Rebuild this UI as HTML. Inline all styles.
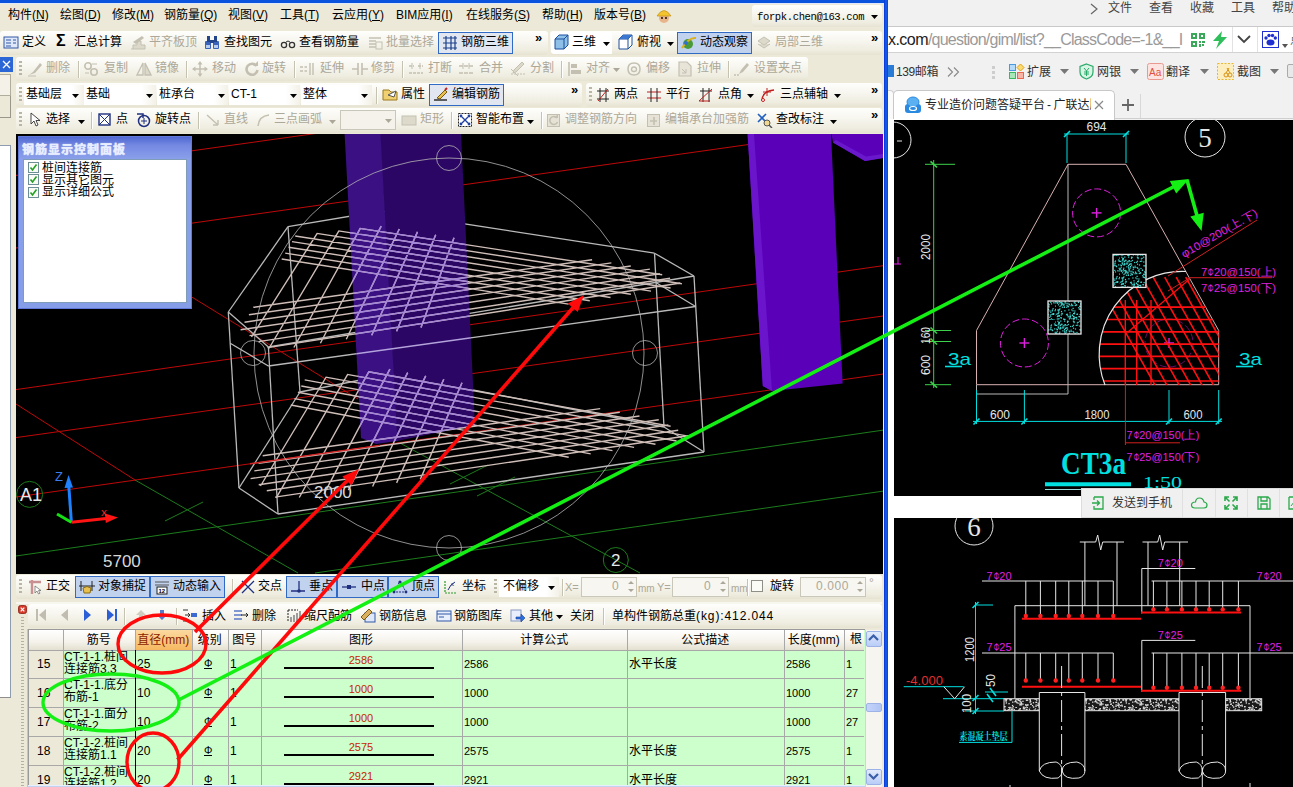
<!DOCTYPE html><html lang="zh"><head><meta charset="utf-8"><title>GGJ</title><style>
*{box-sizing:border-box;margin:0;padding:0}
html,body{width:1293px;height:787px;overflow:hidden;background:#ece9d8}
body{position:relative;font-family:"Liberation Serif","Noto Serif CJK SC",serif;font-size:12px;color:#000}
div,span.t,svg{position:absolute}
span.t{white-space:nowrap;line-height:14px;font-size:12px}
.s{font-family:"Liberation Sans","Noto Sans CJK SC",sans-serif;font-weight:400}
.g{color:#aca899}
.y{font-family:"Liberation Sans","Noto Sans CJK SC",sans-serif}
.tb{background:linear-gradient(#fefefc 0%,#f7f6ef 40%,#efede0 80%,#e6e3d2 100%);border-radius:3px}
.btn{background:#c1d2ee;border:1px solid #316ac5}
.btn2{background:#e1e6f0;border:1px solid #316ac5}
.sep{width:1px;background:#c5c2b2;border-right:1px solid #fff;width:2px}
.grip{width:2px;background:repeating-linear-gradient(#b9b6a6 0 2px,transparent 2px 4px)}
.cb{background:#fff}
</style></head><body>
<div style="left:0px;top:0px;width:884px;height:3px;background:#0a53dc"></div>
<div style="left:0px;top:3px;width:884px;height:1px;background:#dfe8fa"></div>
<div style="left:884px;top:0px;width:4px;height:787px;background:linear-gradient(90deg,#0831d9,#1660e8 50%,#0a3fd8)"></div>
<div style="left:883px;top:134px;width:1px;height:440px;background:#fff"></div>
<div style="left:0px;top:4px;width:884px;height:26px;background:#ece9d8"></div>
<span class="t s" style="left:8px;top:8px;">构件(<u>N</u>)</span>
<span class="t s" style="left:60px;top:8px;">绘图(<u>D</u>)</span>
<span class="t s" style="left:112px;top:8px;">修改(<u>M</u>)</span>
<span class="t s" style="left:164px;top:8px;">钢筋量(<u>Q</u>)</span>
<span class="t s" style="left:228px;top:8px;">视图(<u>V</u>)</span>
<span class="t s" style="left:280px;top:8px;">工具(<u>T</u>)</span>
<span class="t s" style="left:332px;top:8px;">云应用(<u>Y</u>)</span>
<span class="t s" style="left:396px;top:8px;">BIM应用(<u>I</u>)</span>
<span class="t s" style="left:466px;top:8px;">在线服务(<u>S</u>)</span>
<span class="t s" style="left:542px;top:8px;">帮助(<u>H</u>)</span>
<span class="t s" style="left:594px;top:8px;">版本号(<u>B</u>)</span>
<svg style="left:656px;top:8px;" width="16" height="16" viewBox="0 0 16 16"><circle cx="8" cy="10" r="5" fill="#e8b48a"/><path d="M1 8Q8 -3 15 8Z" fill="#f4c430" stroke="#b8860b" stroke-width=".6"/><circle cx="6" cy="10" r=".9"/><circle cx="10" cy="10" r=".9"/></svg>
<div class="tb" style="left:752px;top:5px;width:130px;height:22px;"></div>
<span class="t s" style="left:757px;top:10px;font-family:'Liberation Mono',monospace;font-size:10.5px;letter-spacing:-.35px">forpk.chen@163.com</span>
<svg style="left:871px;top:15px;" width="7" height="4" viewBox="0 0 7 4"><path d="M0 0H7L3.5 4Z" fill="#000"/></svg>
<div class="tb" style="left:0px;top:31px;width:548px;height:24px;"></div>
<div class="tb" style="left:550px;top:31px;width:332px;height:24px;"></div>
<svg style="left:3px;top:35px;" width="16" height="16" viewBox="0 0 16 16"><rect x="1" y="2" width="14" height="11" fill="#dfe8f8" stroke="#3058a8"/><path d="M3 5H8M3 8H8M3 11H8M10 5H13M10 8H13" stroke="#3058a8"/></svg>
<span class="t s" style="left:22px;top:35px;">定义</span>
<span class="t s" style="left:56px;top:32px;font-weight:bold;font-size:16px;line-height:18px;font-family:'Liberation Sans',sans-serif">Σ</span>
<span class="t s" style="left:74px;top:35px;">汇总计算</span>
<svg style="left:130px;top:35px;" width="16" height="16" viewBox="0 0 16 16"><path d="M1 14H15V10H11V6H7V10H3V14" fill="#dcd9ca" stroke="#c3c0b1"/><path d="M3 7L12 1L14 3L6 9Z" fill="#c3c0b1"/></svg>
<span class="t s g" style="left:149px;top:35px;">平齐板顶</span>
<svg style="left:204px;top:35px;" width="16" height="16" viewBox="0 0 16 16"><rect x="1" y="6" width="6" height="8" rx="1" fill="#3a62b8"/><rect x="9" y="6" width="6" height="8" rx="1" fill="#3a62b8"/><rect x="3" y="1" width="3" height="6" fill="#22448a"/><rect x="10" y="1" width="3" height="6" fill="#22448a"/><rect x="6" y="5" width="4" height="3" fill="#22448a"/><rect x="2" y="10" width="4" height="3" fill="#b8ccf0"/><rect x="10" y="10" width="4" height="3" fill="#b8ccf0"/></svg>
<span class="t s" style="left:224px;top:35px;">查找图元</span>
<svg style="left:280px;top:35px;" width="16" height="16" viewBox="0 0 16 16"><circle cx="4" cy="10" r="2.6" fill="none" stroke="#333" stroke-width="1.3"/><circle cx="12" cy="10" r="2.6" fill="none" stroke="#333" stroke-width="1.3"/><path d="M6 7Q8 5 10 7" fill="none" stroke="#333"/></svg>
<span class="t s" style="left:299px;top:35px;">查看钢筋量</span>
<svg style="left:367px;top:35px;" width="16" height="16" viewBox="0 0 16 16"><path d="M2 3H14M2 6H9M2 9H9M2 12H9" stroke="#c4c1b2" stroke-width="1.5"/><rect x="9" y="7" width="6" height="7" fill="none" stroke="#c4c1b2"/></svg>
<span class="t s g" style="left:386px;top:35px;">批量选择</span>
<div class="btn2" style="left:438px;top:32px;width:75px;height:22px;"></div>
<svg style="left:442px;top:35px;" width="16" height="16" viewBox="0 0 16 16"><path d="M1 3H15M1 8H15M1 13H15M4 1V15M9 1V15M13 1V15" stroke="#1c3f8c" stroke-width="1.2" fill="none"/></svg>
<span class="t s" style="left:461px;top:35px;">钢筋三维</span>
<span class="t s" style="left:535px;top:31px;font-weight:bold;font-size:13px;font-family:'Liberation Sans',sans-serif">»</span>
<div style="left:551px;top:32px;width:61px;height:22px;background:#fff;border-radius:3px 0 0 3px"></div>
<svg style="left:553px;top:34px;" width="17" height="17" viewBox="0 0 17 17"><path d="M2 5L6 1H15V11L11 15H2Z" fill="#8fc0e8" stroke="#1c4f9c"/><path d="M2 5H11V15M11 5L15 1" fill="none" stroke="#1c4f9c"/></svg>
<span class="t s" style="left:572px;top:35px;">三维</span>
<svg style="left:603px;top:42px;" width="7" height="4" viewBox="0 0 7 4"><path d="M0 0H7L3.5 4Z" fill="#000"/></svg>
<svg style="left:617px;top:34px;" width="17" height="17" viewBox="0 0 17 17"><path d="M2 5L6 1H15V11L11 15H2Z" fill="#fff" stroke="#1c4f9c"/><path d="M2 5H11V15M11 5L15 1" fill="none" stroke="#1c4f9c"/><path d="M6 1H15L11 5H2Z" fill="#3c78d0"/></svg>
<span class="t s" style="left:637px;top:35px;">俯视</span>
<svg style="left:667px;top:42px;" width="7" height="4" viewBox="0 0 7 4"><path d="M0 0H7L3.5 4Z" fill="#000"/></svg>
<div class="btn" style="left:677px;top:32px;width:75px;height:22px;"></div>
<svg style="left:681px;top:35px;" width="16" height="16" viewBox="0 0 16 16"><circle cx="7" cy="9" r="5" fill="#4a9a3a"/><path d="M1 13Q8 2 15 3" stroke="#d8b020" stroke-width="2" fill="none"/><circle cx="5" cy="8" r="2" fill="#2f6fd0"/></svg>
<span class="t s" style="left:700px;top:35px;">动态观察</span>
<svg style="left:756px;top:35px;" width="16" height="16" viewBox="0 0 16 16"><path d="M2 6L8 2L14 6L8 10Z M2 9L8 13L14 9" fill="#dddacb" stroke="#c4c1b2"/></svg>
<span class="t s g" style="left:775px;top:35px;">局部三维</span>
<span class="t s" style="left:871px;top:31px;font-weight:bold;font-size:13px;font-family:'Liberation Sans',sans-serif">»</span>
<div style="left:0px;top:56px;width:14px;height:520px;background:#ece9d8"></div>
<div style="left:0px;top:57px;width:13px;height:15px;background:#2b66d6"></div>
<svg style="left:1px;top:59px;" width="11" height="11" viewBox="0 0 11 11"><path d="M2 2L9 9M9 2L2 9" stroke="#fff" stroke-width="1.3"/></svg>
<div style="left:0px;top:74px;width:11px;height:22px;background:#f4f2e8;border:1px solid #b0ad9c;border-left:0"></div>
<div style="left:0px;top:96px;width:11px;height:22px;background:#ece9d8;border:1px solid #9a978a;border-left:0;border-top:0"></div>
<div style="left:0px;top:145px;width:11px;height:553px;background:#fff;border-top:1px solid #8e9cb0;border-right:1px solid #8e9cb0;border-bottom:1px solid #8e8e8e"></div>
<div class="tb" style="left:16px;top:57px;width:792px;height:24px;"></div>
<div class="grip" style="left:19px;top:61px;width:3px;height:16px;"></div>
<svg style="left:27px;top:61px;" width="16" height="16" viewBox="0 0 16 16"><path d="M2 14L6 11L13 2L15 4L8 12Z" fill="#c3c0b1"/><path d="M1 15H9" stroke="#c3c0b1"/></svg>
<span class="t s g" style="left:46px;top:61px;">删除</span>
<svg style="left:83px;top:61px;" width="16" height="16" viewBox="0 0 16 16"><circle cx="5" cy="5" r="3.2" fill="none" stroke="#c3c0b1" stroke-width="1.6"/><circle cx="11" cy="11" r="3.2" fill="none" stroke="#c3c0b1" stroke-width="1.6"/><path d="M9 3H14M2 12H6" stroke="#c3c0b1"/></svg>
<span class="t s g" style="left:104px;top:61px;">复制</span>
<svg style="left:136px;top:61px;" width="16" height="16" viewBox="0 0 16 16"><path d="M7 2V14H1Z" fill="none" stroke="#c3c0b1" stroke-width="1.3"/><path d="M9 2V14H15Z" fill="#dcd9ca" stroke="#c3c0b1" stroke-width="1.3"/></svg>
<span class="t s g" style="left:155px;top:61px;">镜像</span>
<svg style="left:192px;top:61px;" width="16" height="16" viewBox="0 0 16 16"><path d="M8 1V15M1 8H15" stroke="#c3c0b1" stroke-width="1.5"/><path d="M8 0L5.5 3.5H10.5ZM8 16L5.5 12.5H10.5ZM0 8L3.5 5.5V10.5ZM16 8L12.5 5.5V10.5Z" fill="#c3c0b1"/></svg>
<span class="t s g" style="left:212px;top:61px;">移动</span>
<svg style="left:244px;top:61px;" width="16" height="16" viewBox="0 0 16 16"><path d="M12.5 5A5.5 5.5 0 1 0 13.5 9" fill="none" stroke="#c3c0b1" stroke-width="2.6"/><path d="M9 5H14V0Z" fill="#c3c0b1"/></svg>
<span class="t s g" style="left:262px;top:61px;">旋转</span>
<svg style="left:299px;top:61px;" width="16" height="16" viewBox="0 0 16 16"><path d="M1 6H8M1 10H8" stroke="#c3c0b1" stroke-width="1.4" stroke-dasharray="3 1.5"/><path d="M11 2V14M14 2V14" stroke="#c3c0b1" stroke-width="1.4"/></svg>
<span class="t s g" style="left:320px;top:61px;">延伸</span>
<svg style="left:352px;top:61px;" width="16" height="16" viewBox="0 0 16 16"><path d="M0 8H6M10 8H16" stroke="#c3c0b1" stroke-width="1.4"/><path d="M6 2V14M10 2V14" stroke="#c3c0b1" stroke-width="1.6"/></svg>
<span class="t s g" style="left:371px;top:61px;">修剪</span>
<svg style="left:408px;top:61px;" width="16" height="16" viewBox="0 0 16 16"><path d="M1 5H6M10 5H15M1 12H15" stroke="#c3c0b1" stroke-width="1.6" stroke-dasharray="3 1"/><path d="M4 2V8M12 2V8" stroke="#c3c0b1"/></svg>
<span class="t s g" style="left:428px;top:61px;">打断</span>
<svg style="left:458px;top:61px;" width="16" height="16" viewBox="0 0 16 16"><path d="M1 5H15M1 12H15" stroke="#c3c0b1" stroke-width="1.6" stroke-dasharray="4 1"/><path d="M5 2V8M11 2V8" stroke="#c3c0b1"/></svg>
<span class="t s g" style="left:479px;top:61px;">合并</span>
<svg style="left:510px;top:61px;" width="16" height="16" viewBox="0 0 16 16"><path d="M1 13H15" stroke="#c3c0b1" stroke-dasharray="2 1"/><path d="M3 12L6 11L14 3L12 1L4 9Z" fill="#dcd9ca" stroke="#c3c0b1"/><path d="M1 8L8 15" stroke="#c3c0b1"/></svg>
<span class="t s g" style="left:530px;top:61px;">分割</span>
<svg style="left:567px;top:61px;" width="16" height="16" viewBox="0 0 16 16"><path d="M2 1V15" stroke="#c3c0b1" stroke-width="1.6"/><rect x="4" y="3" width="6" height="4" fill="#c3c0b1"/><rect x="4" y="9" width="10" height="4" fill="#c3c0b1"/></svg>
<span class="t s g" style="left:586px;top:61px;">对齐</span>
<svg style="left:626px;top:61px;" width="16" height="16" viewBox="0 0 16 16"><path d="M8 2Q14 2 14 8Q14 14 8 14Q2 14 2 8Q2 2 8 2Z" fill="none" stroke="#c3c0b1" stroke-width="1.5"/><path d="M8 6Q10.5 6 10.5 8.5Q10.5 10.5 8 10.5Q5.5 10.5 5.5 8.5Q5.5 6 8 6Z" fill="none" stroke="#c3c0b1" stroke-width="1.3"/></svg>
<span class="t s g" style="left:646px;top:61px;">偏移</span>
<svg style="left:677px;top:61px;" width="16" height="16" viewBox="0 0 16 16"><path d="M2 1H10L14 5V15H2Z" fill="#e8e5d8" stroke="#c3c0b1" stroke-width="1.2"/><path d="M5 8L9 12M9 8V12H5" stroke="#c3c0b1" fill="none"/></svg>
<span class="t s g" style="left:697px;top:61px;">拉伸</span>
<svg style="left:733px;top:61px;" width="16" height="16" viewBox="0 0 16 16"><path d="M1 14H6" stroke="#c3c0b1" stroke-width="1.6" stroke-dasharray="2 1"/><path d="M6 13L8 9L14 2L16 4L10 11Z" fill="#c3c0b1"/></svg>
<span class="t s g" style="left:754px;top:61px;">设置夹点</span>
<svg style="left:613px;top:68px;" width="7" height="4" viewBox="0 0 7 4"><path d="M0 0H7L3.5 4Z" fill="#aca899"/></svg>
<div class="sep" style="left:78px;top:61px;width:2px;height:17px;"></div>
<div class="sep" style="left:186px;top:61px;width:2px;height:17px;"></div>
<div class="sep" style="left:294px;top:61px;width:2px;height:17px;"></div>
<div class="sep" style="left:402px;top:61px;width:2px;height:17px;"></div>
<div class="sep" style="left:561px;top:61px;width:2px;height:17px;"></div>
<div class="sep" style="left:728px;top:61px;width:2px;height:17px;"></div>
<div class="tb" style="left:16px;top:83px;width:566px;height:24px;"></div>
<div class="tb" style="left:586px;top:83px;width:296px;height:24px;"></div>
<div class="grip" style="left:19px;top:87px;width:3px;height:16px;"></div>
<div style="left:24px;top:85px;width:60px;height:20px;background:linear-gradient(90deg,#fff 80%,#f3f1e7)"></div>
<span class="t s" style="left:26px;top:87px;">基础层</span>
<svg style="left:72px;top:94px;" width="7" height="4" viewBox="0 0 7 4"><path d="M0 0H7L3.5 4Z" fill="#000"/></svg>
<div style="left:84px;top:85px;width:72px;height:20px;background:linear-gradient(90deg,#fff 80%,#f3f1e7)"></div>
<span class="t s" style="left:86px;top:87px;">基础</span>
<svg style="left:146px;top:94px;" width="7" height="4" viewBox="0 0 7 4"><path d="M0 0H7L3.5 4Z" fill="#000"/></svg>
<div style="left:157px;top:85px;width:71px;height:20px;background:linear-gradient(90deg,#fff 80%,#f3f1e7)"></div>
<span class="t s" style="left:159px;top:87px;">桩承台</span>
<svg style="left:218px;top:94px;" width="7" height="4" viewBox="0 0 7 4"><path d="M0 0H7L3.5 4Z" fill="#000"/></svg>
<div style="left:229px;top:85px;width:71px;height:20px;background:linear-gradient(90deg,#fff 80%,#f3f1e7)"></div>
<span class="t s" style="left:231px;top:87px;">CT-1</span>
<svg style="left:290px;top:94px;" width="7" height="4" viewBox="0 0 7 4"><path d="M0 0H7L3.5 4Z" fill="#000"/></svg>
<div style="left:301px;top:85px;width:71px;height:20px;background:linear-gradient(90deg,#fff 80%,#f3f1e7)"></div>
<span class="t s" style="left:303px;top:87px;">整体</span>
<svg style="left:361px;top:94px;" width="7" height="4" viewBox="0 0 7 4"><path d="M0 0H7L3.5 4Z" fill="#000"/></svg>
<div class="sep" style="left:376px;top:87px;width:2px;height:17px;"></div>
<svg style="left:382px;top:86px;" width="16" height="16" viewBox="0 0 16 16"><path d="M1 4H7L9 6H15V14H1Z" fill="#f0d070" stroke="#9a7a20"/><path d="M6 9L14 5L12 11Z" fill="#fff" stroke="#555"/></svg>
<span class="t s" style="left:401px;top:87px;">属性</span>
<div class="btn2" style="left:429px;top:84px;width:75px;height:22px;"></div>
<svg style="left:433px;top:87px;" width="16" height="16" viewBox="0 0 16 16"><path d="M1 13H14" stroke="#222" stroke-width="1.4"/><path d="M4 11L12 3L14 5L7 12Z" fill="#e8c050" stroke="#7a5a10"/><path d="M12 3L14 1" stroke="#c02020" stroke-width="2"/></svg>
<span class="t s" style="left:452px;top:87px;">编辑钢筋</span>
<span class="t s" style="left:571px;top:83px;font-weight:bold;font-size:13px;font-family:'Liberation Sans',sans-serif">»</span>
<div class="grip" style="left:589px;top:87px;width:3px;height:16px;"></div>
<svg style="left:595px;top:87px;" width="16" height="16" viewBox="0 0 16 16"><path d="M2 4H14M2 12H14M5 1V15M11 1V15" stroke="#222" fill="none"/><path d="M3 14L13 2" stroke="#c02020"/></svg>
<span class="t s" style="left:614px;top:87px;">两点</span>
<svg style="left:646px;top:87px;" width="16" height="16" viewBox="0 0 16 16"><path d="M1 5H15M1 11H15" stroke="#c02020"/><path d="M5 1V15M11 1V15" stroke="#222"/></svg>
<span class="t s" style="left:666px;top:87px;">平行</span>
<svg style="left:698px;top:87px;" width="16" height="16" viewBox="0 0 16 16"><path d="M2 4H14M5 1V15M11 1V15" stroke="#222" fill="none"/><path d="M1 14L14 2M1 14H12" stroke="#c02020"/></svg>
<span class="t s" style="left:718px;top:87px;">点角</span>
<svg style="left:747px;top:94px;" width="7" height="4" viewBox="0 0 7 4"><path d="M0 0H7L3.5 4Z" fill="#000"/></svg>
<svg style="left:760px;top:87px;" width="16" height="16" viewBox="0 0 16 16"><path d="M2 14Q2 4 14 3" stroke="#c02020" fill="none" stroke-width="1.3"/><path d="M7 1V9M3 5H11" stroke="#c02020"/><circle cx="3" cy="13" r="1.5" fill="#fff" stroke="#c02020"/></svg>
<span class="t s" style="left:780px;top:87px;">三点辅轴</span>
<svg style="left:834px;top:94px;" width="7" height="4" viewBox="0 0 7 4"><path d="M0 0H7L3.5 4Z" fill="#000"/></svg>
<span class="t s" style="left:871px;top:83px;font-weight:bold;font-size:13px;font-family:'Liberation Sans',sans-serif">»</span>
<div class="tb" style="left:16px;top:108px;width:866px;height:25px;"></div>
<div class="grip" style="left:19px;top:112px;width:3px;height:16px;"></div>
<svg style="left:28px;top:112px;" width="16" height="16" viewBox="0 0 16 16"><path d="M3 1V12L6 9L8 14L10 13L8 8.5H12Z" fill="#fff" stroke="#333" stroke-width=".9"/></svg>
<span class="t s" style="left:46px;top:112px;">选择</span>
<svg style="left:78px;top:120px;" width="7" height="4" viewBox="0 0 7 4"><path d="M0 0H7L3.5 4Z" fill="#000"/></svg>
<div class="sep" style="left:91px;top:112px;width:2px;height:17px;"></div>
<svg style="left:97px;top:112px;" width="16" height="16" viewBox="0 0 16 16"><rect x="2" y="2" width="11" height="11" fill="#fff" stroke="#203080" stroke-width="1.4"/><path d="M2 2L13 13M13 2L2 13" stroke="#203080"/></svg>
<span class="t s" style="left:116px;top:112px;">点</span>
<svg style="left:136px;top:111px;" width="17" height="17" viewBox="0 0 17 17"><circle cx="8" cy="10" r="5.5" fill="none" stroke="#203080" stroke-width="1.5"/><path d="M8 7V13M5 10H11" stroke="#203080"/><path d="M1 3H7V7" fill="none" stroke="#203080" stroke-width="1.5"/></svg>
<span class="t s" style="left:155px;top:112px;">旋转点</span>
<div class="sep" style="left:198px;top:112px;width:2px;height:17px;"></div>
<svg style="left:205px;top:112px;" width="16" height="16" viewBox="0 0 16 16"><path d="M2 3L13 13M13 13V8M13 13H8" stroke="#c4c1b2" stroke-width="1.4" fill="none"/></svg>
<span class="t s g" style="left:224px;top:112px;">直线</span>
<svg style="left:256px;top:112px;" width="16" height="16" viewBox="0 0 16 16"><path d="M2 14Q3 4 13 3" stroke="#c4c1b2" stroke-width="1.6" fill="none"/></svg>
<span class="t s g" style="left:274px;top:112px;">三点画弧</span>
<svg style="left:329px;top:120px;" width="7" height="4" viewBox="0 0 7 4"><path d="M0 0H7L3.5 4Z" fill="#aca899"/></svg>
<div style="left:340px;top:110px;width:56px;height:20px;background:#f4f2ea;border:1px solid #c9c7ba"></div>
<svg style="left:385px;top:119px;" width="7" height="4" viewBox="0 0 7 4"><path d="M0 0H7L3.5 4Z" fill="#aca899"/></svg>
<svg style="left:401px;top:112px;" width="16" height="16" viewBox="0 0 16 16"><rect x="1" y="4" width="14" height="9" fill="#dddacb" stroke="#c4c1b2"/></svg>
<span class="t s g" style="left:420px;top:112px;">矩形</span>
<div class="sep" style="left:451px;top:112px;width:2px;height:17px;"></div>
<svg style="left:457px;top:112px;" width="16" height="16" viewBox="0 0 16 16"><rect x="1.5" y="1.5" width="13" height="13" fill="#fff" stroke="#222" stroke-dasharray="2 1"/><path d="M5 5L11 11M11 5L5 11" stroke="#2040a0" stroke-width="1.4"/><circle cx="4" cy="4" r="1.4" fill="#2040a0"/><circle cx="12" cy="4" r="1.4" fill="#2040a0"/><circle cx="4" cy="12" r="1.4" fill="#2040a0"/><circle cx="12" cy="12" r="1.4" fill="#2040a0"/></svg>
<span class="t s" style="left:476px;top:112px;">智能布置</span>
<svg style="left:527px;top:120px;" width="7" height="4" viewBox="0 0 7 4"><path d="M0 0H7L3.5 4Z" fill="#000"/></svg>
<div class="sep" style="left:541px;top:112px;width:2px;height:17px;"></div>
<svg style="left:546px;top:112px;" width="16" height="16" viewBox="0 0 16 16"><rect x="1.5" y="2.5" width="12" height="12" fill="#e6e3d6" stroke="#c3c0b1"/><path d="M11 6A4 4 0 1 0 11.5 10" fill="none" stroke="#c3c0b1" stroke-width="1.6"/><path d="M8 6H12V2Z" fill="#c3c0b1"/></svg>
<span class="t s g" style="left:565px;top:112px;">调整钢筋方向</span>
<svg style="left:646px;top:112px;" width="16" height="16" viewBox="0 0 16 16"><rect x="1.5" y="2.5" width="12" height="12" fill="#e6e3d6" stroke="#c3c0b1"/><path d="M4 9H11M8 5V13" stroke="#c3c0b1" stroke-width="1.6"/></svg>
<span class="t s g" style="left:665px;top:112px;">编辑承台加强筋</span>
<svg style="left:757px;top:112px;" width="16" height="16" viewBox="0 0 16 16"><path d="M1 2L9 10M9 2L1 10" stroke="#2060c0" stroke-width="1.6"/><circle cx="10" cy="11" r="3" fill="#f0d890" stroke="#555"/><path d="M12 13L15 16" stroke="#555" stroke-width="1.5"/></svg>
<span class="t s" style="left:776px;top:112px;">查改标注</span>
<svg style="left:830px;top:120px;" width="7" height="4" viewBox="0 0 7 4"><path d="M0 0H7L3.5 4Z" fill="#000"/></svg>
<span class="t s" style="left:871px;top:108px;font-weight:bold;font-size:13px;font-family:'Liberation Sans',sans-serif">»</span>
<svg style="left:16px;top:134px;" width="868" height="440" viewBox="16 134 868 440"><rect x="16" y="134" width="868" height="440" fill="#000"/><line x1="16.0" y1="175.4" x2="330.0" y2="131.5" stroke="#be0808" stroke-width="1" /><line x1="16.0" y1="248.0" x2="830.0" y2="133.0" stroke="#be0808" stroke-width="1" /><line x1="16.0" y1="389.6" x2="883.0" y2="265.7" stroke="#be0808" stroke-width="1" /><line x1="16.0" y1="437.6" x2="883.0" y2="316.0" stroke="#be0808" stroke-width="1" /><line x1="16.0" y1="497.0" x2="883.0" y2="374.0" stroke="#be0808" stroke-width="1" /><line x1="16.0" y1="404.0" x2="135.0" y2="480.0" stroke="#be0808" stroke-width="1" /><line x1="135.0" y1="480.0" x2="298.0" y2="573.0" stroke="#1c7c1c" stroke-width="1" /><line x1="120.0" y1="253.0" x2="358.0" y2="399.0" stroke="#be0808" stroke-width="1" /><line x1="400.0" y1="443.0" x2="640.0" y2="573.0" stroke="#1c7c1c" stroke-width="1" /><line x1="16.0" y1="556.0" x2="884.0" y2="430.0" stroke="#1c7c1c" stroke-width="1" /><line x1="315.0" y1="573.0" x2="884.0" y2="491.0" stroke="#1c7c1c" stroke-width="1" /><line x1="165.0" y1="521.0" x2="203.0" y2="502.0" stroke="#1c7c1c" stroke-width="1" /><line x1="450.0" y1="484.0" x2="488.0" y2="465.0" stroke="#1c7c1c" stroke-width="1" /><line x1="477.0" y1="496.0" x2="515.0" y2="477.0" stroke="#1c7c1c" stroke-width="1" /><line x1="268.4" y1="347.0" x2="694.0" y2="276.0" stroke="#b9b9b9" stroke-width="1.3" /><line x1="694.0" y1="276.0" x2="654.5" y2="253.2" stroke="#b9b9b9" stroke-width="1.3" /><line x1="654.5" y1="253.2" x2="381.0" y2="211.0" stroke="#b9b9b9" stroke-width="1.3" /><line x1="381.0" y1="211.0" x2="288.0" y2="226.7" stroke="#b9b9b9" stroke-width="1.3" /><line x1="288.0" y1="226.7" x2="228.3" y2="312.0" stroke="#b9b9b9" stroke-width="1.3" /><line x1="228.3" y1="312.0" x2="268.4" y2="347.0" stroke="#b9b9b9" stroke-width="1.3" /><line x1="278.0" y1="514.0" x2="704.0" y2="452.0" stroke="#b9b9b9" stroke-width="1.3" /><line x1="704.0" y1="452.0" x2="664.0" y2="427.0" stroke="#b9b9b9" stroke-width="1.3" /><line x1="664.0" y1="427.0" x2="391.0" y2="374.0" stroke="#b9b9b9" stroke-width="1.3" /><line x1="391.0" y1="374.0" x2="300.0" y2="392.0" stroke="#b9b9b9" stroke-width="1.3" /><line x1="300.0" y1="392.0" x2="239.0" y2="488.0" stroke="#b9b9b9" stroke-width="1.3" /><line x1="239.0" y1="488.0" x2="278.0" y2="514.0" stroke="#b9b9b9" stroke-width="1.3" /><line x1="268.4" y1="347.0" x2="278.0" y2="514.0" stroke="#b9b9b9" stroke-width="1.3" /><line x1="694.0" y1="276.0" x2="704.0" y2="452.0" stroke="#b9b9b9" stroke-width="1.3" /><line x1="654.5" y1="253.2" x2="664.0" y2="427.0" stroke="#b9b9b9" stroke-width="1.3" /><line x1="381.0" y1="211.0" x2="391.0" y2="374.0" stroke="#b9b9b9" stroke-width="1.3" /><line x1="288.0" y1="226.7" x2="300.0" y2="392.0" stroke="#b9b9b9" stroke-width="1.3" /><line x1="228.3" y1="312.0" x2="239.0" y2="488.0" stroke="#b9b9b9" stroke-width="1.3" /><line x1="230.2" y1="343.2" x2="268.4" y2="366.0" stroke="#b9b9b9" stroke-width="1.3" /><line x1="268.4" y1="366.0" x2="695.6" y2="306.5" stroke="#b9b9b9" stroke-width="1.3" /><line x1="695.6" y1="306.5" x2="655.0" y2="282.0" stroke="#b9b9b9" stroke-width="1.3" /><polygon points="380,134 461,134 475,425 397,441" fill="#2c0664"/><polygon points="344.6,134 380.5,134 397.5,441 376,444 361,438" fill="#3a1082"/><polygon points="747.6,134 831,134 842.6,383.6 772,391 762.8,386" fill="#5a00b9"/><polygon points="747.6,134 754,134 772,391 762.8,386" fill="#6a14cc"/><polygon points="831.5,134 883,134 883,158 865,161 833,142.5" fill="#5a00b9"/><polygon points="833,142.5 865,161 883,158 883,154 866,156.5 836,140" fill="#6a18cc"/><defs><clipPath id="colclip"><polygon points="344.6,134 461,134 475,425 397,441 376,444 361,438"/></clipPath></defs><path d="M267.6,347.6L680.5,283.0M258.5,341.6L670.1,278.3M249.5,335.6L659.9,273.7M240.6,329.8L649.9,269.1M244.5,322.2L630.8,266.0M248.9,314.7L611.4,262.9M253.3,307.3L592.1,259.8M281.7,259.0L568.6,304.1M285.2,253.1L589.8,300.7M288.6,247.3L610.5,297.5M292.0,241.6L630.9,294.2M295.2,236.0L651.0,291.1M316.7,233.4L670.6,288.0M338.4,230.9L681.9,283.7M359.7,228.4L662.2,274.7M317.2,233.3L251.5,337.0M338.9,230.8L268.9,348.5M360.3,228.3L293.9,347.5M381.2,226.1L320.4,343.3M399.3,229.0L346.3,339.2M417.5,231.9L371.7,335.2M435.7,234.8L396.6,331.3M454.0,237.7L421.0,327.4M275.0,497.1L688.0,435.7M266.8,490.8L678.2,430.3M258.7,484.7L668.4,425.0M250.6,478.6L658.8,419.8M254.3,470.9L639.5,416.0M258.5,463.3L619.8,412.3M262.7,455.8L600.2,408.6M290.8,405.0L568.7,457.2M294.4,398.6L590.7,453.9M297.9,392.3L612.5,450.6M301.3,386.0L634.1,447.4M304.7,379.9L655.5,444.2M325.7,377.1L676.6,441.0M347.1,374.4L689.4,436.4M368.4,371.7L670.6,426.2M326.2,377.0L260.5,486.0M347.7,374.3L276.2,497.9M368.9,371.7L299.3,497.5M389.9,369.2L324.0,493.8M407.7,372.6L348.4,490.1M425.7,375.9L372.6,486.5M443.8,379.3L396.6,482.9M462.0,382.7L420.3,479.4" stroke="#cfbeb8" stroke-width="1.4" fill="none"/><path d="M267.6,347.6L680.5,283.0M258.5,341.6L670.1,278.3M249.5,335.6L659.9,273.7M240.6,329.8L649.9,269.1M244.5,322.2L630.8,266.0M248.9,314.7L611.4,262.9M253.3,307.3L592.1,259.8M281.7,259.0L568.6,304.1M285.2,253.1L589.8,300.7M288.6,247.3L610.5,297.5M292.0,241.6L630.9,294.2M295.2,236.0L651.0,291.1M316.7,233.4L670.6,288.0M338.4,230.9L681.9,283.7M359.7,228.4L662.2,274.7M317.2,233.3L251.5,337.0M338.9,230.8L268.9,348.5M360.3,228.3L293.9,347.5M381.2,226.1L320.4,343.3M399.3,229.0L346.3,339.2M417.5,231.9L371.7,335.2M435.7,234.8L396.6,331.3M454.0,237.7L421.0,327.4M275.0,497.1L688.0,435.7M266.8,490.8L678.2,430.3M258.7,484.7L668.4,425.0M250.6,478.6L658.8,419.8M254.3,470.9L639.5,416.0M258.5,463.3L619.8,412.3M262.7,455.8L600.2,408.6M290.8,405.0L568.7,457.2M294.4,398.6L590.7,453.9M297.9,392.3L612.5,450.6M301.3,386.0L634.1,447.4M304.7,379.9L655.5,444.2M325.7,377.1L676.6,441.0M347.1,374.4L689.4,436.4M368.4,371.7L670.6,426.2M326.2,377.0L260.5,486.0M347.7,374.3L276.2,497.9M368.9,371.7L299.3,497.5M389.9,369.2L324.0,493.8M407.7,372.6L348.4,490.1M425.7,375.9L372.6,486.5M443.8,379.3L396.6,482.9M462.0,382.7L420.3,479.4" stroke="#a486da" stroke-width="1.4" fill="none" clip-path="url(#colclip)"/><line x1="250.0" y1="463.8" x2="380.0" y2="445.4" stroke="#d02828" stroke-width="1.4" /><path d="M268.4,366L695.6,306.5" stroke="#b4a4dc" stroke-width="1.3" fill="none" clip-path="url(#colclip)"/><circle cx="449" cy="353" r="195" fill="none" stroke="#b4b4b4" stroke-width=".8"/><circle cx="449" cy="158" r="12.5" fill="none" stroke="#b4b4b4" stroke-width=".8"/><circle cx="645" cy="353" r="12.5" fill="none" stroke="#b4b4b4" stroke-width=".8"/><circle cx="449" cy="548" r="12.5" fill="none" stroke="#b4b4b4" stroke-width=".8"/><circle cx="253" cy="353" r="12.5" fill="none" stroke="#b4b4b4" stroke-width=".8"/><text x="103" y="567" font-size="17" fill="#d8d8d8" font-family="Liberation Sans,sans-serif">5700</text><text x="314" y="498" font-size="17" fill="#d8d8d8" font-family="Liberation Sans,sans-serif">2000</text><circle cx="29.6" cy="494.4" r="13" fill="none" stroke="#1c7c1c"/><text x="20" y="501" font-size="18" fill="#e8e8e8" font-family="Liberation Sans,sans-serif">A1</text><circle cx="615.8" cy="560" r="12.5" fill="none" stroke="#1c7c1c"/><text x="611" y="566" font-size="17" fill="#e8e8e8" font-family="Liberation Sans,sans-serif">2</text><line x1="71.4" y1="522.3" x2="68.8" y2="486.0" stroke="#1e82ff" stroke-width="3" /><polygon points="64.5,488 73,487.5 68.5,475" fill="#1e82ff"/><line x1="71.4" y1="522.3" x2="106.0" y2="518.5" stroke="#ff1414" stroke-width="3" /><polygon points="105,513.5 105.8,523 118,517.5" fill="#ff1414"/><line x1="71.4" y1="522.3" x2="57.0" y2="514.0" stroke="#14e014" stroke-width="3" /><text x="55" y="481" font-size="13" fill="#3c7cf0" font-family="Liberation Sans,sans-serif">Z</text><text x="101" y="516" font-size="9" fill="#ff3030" font-family="Liberation Sans,sans-serif">X</text></svg>
<div style="left:883px;top:134px;width:1px;height:440px;background:#eef2fb"></div>
<div style="left:18px;top:136px;width:174px;height:173px;background:linear-gradient(#5068d2 0,#7488e2 8px,#8aa0ea 22px,#869ee8 100%);border:1px solid #6078d8"></div>
<span class="t s" style="left:22px;top:143px;color:#e8eeff;font-weight:900;font-size:12px;letter-spacing:1px;text-shadow:0 0 1px #dfe6ff">钢筋显示控制面板</span>
<div style="left:23px;top:159px;width:164px;height:144px;background:#fff;border:1px solid #7f9db9"></div>
<div style="left:28px;top:162.0px;width:11px;height:11px;background:#fbfbf6;border:1px solid #6f8f96"></div>
<svg style="left:29px;top:163.0px;" width="9" height="9" viewBox="0 0 9 9"><path d="M1.5 4.5L3.5 7L7.5 1.5" stroke="#21a121" stroke-width="1.6" fill="none"/></svg>
<span class="t s" style="left:42px;top:160.5px;">桩间连接筋</span>
<div style="left:28px;top:174.3px;width:11px;height:11px;background:#fbfbf6;border:1px solid #6f8f96"></div>
<svg style="left:29px;top:175.3px;" width="9" height="9" viewBox="0 0 9 9"><path d="M1.5 4.5L3.5 7L7.5 1.5" stroke="#21a121" stroke-width="1.6" fill="none"/></svg>
<span class="t s" style="left:42px;top:172.8px;">显示其它图元</span>
<div style="left:28px;top:186.6px;width:11px;height:11px;background:#fbfbf6;border:1px solid #6f8f96"></div>
<svg style="left:29px;top:187.6px;" width="9" height="9" viewBox="0 0 9 9"><path d="M1.5 4.5L3.5 7L7.5 1.5" stroke="#21a121" stroke-width="1.6" fill="none"/></svg>
<span class="t s" style="left:42px;top:185.1px;">显示详细公式</span>
<div style="left:16px;top:574px;width:868px;height:26px;background:#ece9d8"></div>
<div class="tb" style="left:16px;top:575px;width:866px;height:24px;"></div>
<div class="grip" style="left:19px;top:579px;width:3px;height:16px;"></div>
<svg style="left:27px;top:579px;" width="16" height="16" viewBox="0 0 16 16"><path d="M2 3H14M5 1V15" stroke="#c89090" stroke-width="2.4"/><path d="M8 7V14L10 12L11.5 15L13 14.2L11.5 11.5H14Z" fill="#fff" stroke="#666" stroke-width=".7"/></svg>
<span class="t s" style="left:46px;top:579px;">正交</span>
<div class="btn" style="left:75px;top:576px;width:75px;height:22px;"></div>
<svg style="left:79px;top:579px;" width="16" height="16" viewBox="0 0 16 16"><path d="M2 2V12M13 2V12M0 7H16" stroke="#222"/><path d="M4 9Q8 6 12 9L11 14H5Z" fill="#e8c050" stroke="#8a6a10"/></svg>
<span class="t s" style="left:98px;top:579px;">对象捕捉</span>
<div class="btn" style="left:150px;top:576px;width:75px;height:22px;"></div>
<svg style="left:154px;top:579px;" width="16" height="16" viewBox="0 0 16 16"><path d="M1 3H15M1 6H15" stroke="#555"/><rect x="3" y="8" width="10" height="7" fill="#fff" stroke="#222"/><text x="4.5" y="14" font-size="6" font-family="Liberation Sans,sans-serif" font-weight="bold">12</text></svg>
<span class="t s" style="left:173px;top:579px;">动态输入</span>
<div class="sep" style="left:232px;top:579px;width:2px;height:17px;"></div>
<svg style="left:240px;top:579px;" width="16" height="16" viewBox="0 0 16 16"><path d="M2 2L14 14M14 2L2 14" stroke="#203080" stroke-width="1.3"/></svg>
<span class="t s" style="left:258px;top:579px;">交点</span>
<div class="btn" style="left:286px;top:576px;width:51px;height:22px;"></div>
<svg style="left:290px;top:579px;" width="16" height="16" viewBox="0 0 16 16"><path d="M1 12H15M9 2V12" stroke="#203080" stroke-width="1.3"/><circle cx="9" cy="12" r="1.8" fill="#203080"/></svg>
<span class="t s" style="left:309px;top:579px;">垂点</span>
<div class="btn" style="left:337px;top:576px;width:51px;height:22px;"></div>
<svg style="left:341px;top:579px;" width="16" height="16" viewBox="0 0 16 16"><path d="M1 8H15" stroke="#203080" stroke-width="1.3"/><rect x="6" y="6" width="4" height="4" fill="#203080"/></svg>
<span class="t s" style="left:361px;top:579px;">中点</span>
<div class="btn" style="left:388px;top:576px;width:51px;height:22px;"></div>
<svg style="left:392px;top:579px;" width="16" height="16" viewBox="0 0 16 16"><path d="M2 13L8 2L14 13Z" fill="none" stroke="#203080" stroke-dasharray="2 1"/><circle cx="8" cy="3" r="1.6" fill="#203080"/><circle cx="2" cy="13" r="1.4" fill="#203080"/><circle cx="14" cy="13" r="1.4" fill="#203080"/></svg>
<span class="t s" style="left:411px;top:579px;">顶点</span>
<svg style="left:442px;top:579px;" width="16" height="16" viewBox="0 0 16 16"><path d="M3 2V14M3 14H15" stroke="#2a9a2a" stroke-width="1.2" stroke-dasharray="2 1"/><path d="M6 11L9 6L13 3" stroke="#203080" fill="none"/><text x="9" y="7" font-size="6" fill="#203080">x</text></svg>
<span class="t s" style="left:462px;top:579px;">坐标</span>
<div class="grip" style="left:494px;top:579px;width:3px;height:16px;"></div>
<div style="left:499px;top:577px;width:60px;height:20px;background:linear-gradient(90deg,#fff 78%,#f3f1e7)"></div>
<span class="t s" style="left:503px;top:579px;">不偏移</span>
<svg style="left:548px;top:586px;" width="7" height="4" viewBox="0 0 7 4"><path d="M0 0H7L3.5 4Z" fill="#000"/></svg>
<div class="sep" style="left:562px;top:579px;width:2px;height:17px;"></div>
<span class="t s g" style="left:565px;top:580px;font-size:11px">X=</span>
<div style="left:581px;top:577px;width:56px;height:20px;background:#f7f6f0;border:1px solid #c9c7ba"></div>
<span class="t s g" style="left:612px;top:579px;">0</span>
<svg style="left:627px;top:580px;" width="8" height="14" viewBox="0 0 8 14"><path d="M1 4L4 1L7 4Z M1 9L4 12L7 9Z" fill="#aca899"/></svg>
<span class="t s g" style="left:638px;top:582px;font-size:10px">mm</span>
<span class="t s g" style="left:657px;top:580px;font-size:11px">Y=</span>
<div style="left:672px;top:577px;width:57px;height:20px;background:#f7f6f0;border:1px solid #c9c7ba"></div>
<span class="t s g" style="left:704px;top:579px;">0</span>
<svg style="left:719px;top:580px;" width="8" height="14" viewBox="0 0 8 14"><path d="M1 4L4 1L7 4Z M1 9L4 12L7 9Z" fill="#aca899"/></svg>
<span class="t s g" style="left:731px;top:582px;font-size:10px">mm</span>
<div class="sep" style="left:747px;top:579px;width:2px;height:17px;"></div>
<div style="left:751px;top:580px;width:12px;height:12px;background:#fbfbf8;border:1px solid #8f8f86"></div>
<span class="t s" style="left:770px;top:579px;">旋转</span>
<div style="left:800px;top:577px;width:66px;height:20px;background:#f7f6f0;border:1px solid #c9c7ba"></div>
<span class="t s g" style="left:816px;top:579px;letter-spacing:.6px">0.000</span>
<svg style="left:856px;top:580px;" width="8" height="14" viewBox="0 0 8 14"><path d="M1 4L4 1L7 4Z M1 9L4 12L7 9Z" fill="#aca899"/></svg>
<span class="t s g" style="left:869px;top:576px;">°</span>
<div style="left:14px;top:600px;width:870px;height:187px;background:#ece9d8"></div>
<div style="left:16px;top:602px;width:866px;height:2px;background:#fff;opacity:.6"></div>
<div class="tb" style="left:28px;top:604px;width:854px;height:24px;"></div>
<svg style="left:18px;top:605px;" width="9" height="9" viewBox="0 0 9 9"><rect x=".5" y=".5" width="8" height="8" rx="2" fill="#d83a2a" stroke="#8a1a10" stroke-width=".8"/><path d="M2.7 2.7L6.3 6.3M6.3 2.7L2.7 6.3" stroke="#fff" stroke-width="1.2"/></svg>
<svg style="left:35px;top:608px;" width="12" height="14" viewBox="0 0 12 14"><path d="M2 1V13" stroke="#c0bdb0" stroke-width="2"/><path d="M11 1V13L4 7Z" fill="#c0bdb0"/></svg>
<svg style="left:59px;top:608px;" width="10" height="14" viewBox="0 0 10 14"><path d="M9 1V13L2 7Z" fill="#c0bdb0"/></svg>
<svg style="left:83px;top:608px;" width="10" height="14" viewBox="0 0 10 14"><path d="M1 1V13L8 7Z" fill="#2a5fd8"/></svg>
<svg style="left:106px;top:608px;" width="12" height="14" viewBox="0 0 12 14"><path d="M1 1V13L8 7Z" fill="#2a5fd8"/><path d="M10 1V13" stroke="#2a5fd8" stroke-width="2"/></svg>
<div class="sep" style="left:124px;top:608px;width:2px;height:17px;"></div>
<svg style="left:135px;top:609px;" width="12" height="12" viewBox="0 0 12 12"><path d="M6 1L11 6H8V11H4V6H1Z" fill="#cfccc0"/></svg>
<svg style="left:156px;top:609px;" width="12" height="12" viewBox="0 0 12 12"><path d="M6 11L11 6H8V1H4V6H1Z" fill="#5a78c8"/></svg>
<div class="sep" style="left:176px;top:608px;width:2px;height:17px;"></div>
<svg style="left:182px;top:608px;" width="16" height="16" viewBox="0 0 16 16"><path d="M1 2H6M1 13H6" stroke="#333"/><rect x="9" y="5" width="6" height="4" fill="#3a6ad0"/><path d="M3 7H8M6 5L8 7L6 9" stroke="#333" fill="none"/></svg>
<span class="t s" style="left:202px;top:609px;">插入</span>
<svg style="left:233px;top:608px;" width="16" height="16" viewBox="0 0 16 16"><path d="M1 3H9M1 7H9M1 11H9" stroke="#5a78c8" stroke-width="1.6"/><path d="M8 7H15M13 5L15 7L13 9" stroke="#222" fill="none"/></svg>
<span class="t s" style="left:252px;top:609px;">删除</span>
<svg style="left:286px;top:608px;" width="16" height="16" viewBox="0 0 16 16"><path d="M2 2V14M2 2H12" stroke="#222" stroke-dasharray="2 1"/><path d="M5 14V9M8 14V7M11 14V5M14 14V3" stroke="#888" stroke-width="1.6"/></svg>
<span class="t s" style="left:304px;top:609px;">缩尺配筋</span>
<svg style="left:360px;top:608px;" width="16" height="16" viewBox="0 0 16 16"><rect x="5" y="5" width="10" height="9" fill="#dfe8f8" stroke="#3058a8"/><path d="M1 9L9 1L12 4L4 12Z" fill="#d8b060" stroke="#7a5a10"/></svg>
<span class="t s" style="left:379px;top:609px;">钢筋信息</span>
<svg style="left:436px;top:608px;" width="16" height="16" viewBox="0 0 16 16"><rect x="1" y="3" width="14" height="10" fill="#e8eefc" stroke="#3058a8"/><path d="M1 6H15M3 9H8" stroke="#3058a8"/></svg>
<span class="t s" style="left:454px;top:609px;">钢筋图库</span>
<svg style="left:510px;top:608px;" width="16" height="16" viewBox="0 0 16 16"><rect x="1" y="2" width="10" height="11" fill="#e8eefc" stroke="#8898c0"/><path d="M6 9H11V6L15 10L11 14V11H6Z" fill="#2a6fe0" stroke="#1a3f9a" stroke-width=".6"/></svg>
<span class="t s" style="left:529px;top:609px;">其他</span>
<svg style="left:556px;top:615px;" width="7" height="4" viewBox="0 0 7 4"><path d="M0 0H7L3.5 4Z" fill="#000"/></svg>
<span class="t s" style="left:570px;top:609px;">关闭</span>
<div class="sep" style="left:603px;top:608px;width:2px;height:17px;"></div>
<span class="t s" style="left:612px;top:609px;">单构件钢筋总重<span style="letter-spacing:.9px">(kg):412.044</span></span>
<div style="left:16px;top:629px;width:12px;height:158px;background:#ece9d8;border-right:1px solid #c8c5b4"></div>
<div style="left:21px;top:617px;width:3px;height:170px;width:3px;background:repeating-linear-gradient(#b4b1a2 0 1px,transparent 1px 3px)"></div>
<div style="left:28px;top:629px;width:837px;height:158px;background:#ccffcc;border-top:1px solid #9a9a9a;border-left:1px solid #9a9a9a"></div>
<div style="left:29px;top:630px;width:835px;height:20px;background:linear-gradient(#ffffff,#f4f2ea 60%,#e4e0d0)"></div>
<div style="left:135px;top:630px;width:56.5px;height:20px;background:linear-gradient(#fbd9a0,#f6b860)"></div>
<span class="t s" style="left:62.5px;top:633px;width:72.5px;text-align:center;color:#000">筋号</span>
<span class="t s" style="left:135px;top:633px;width:56.5px;text-align:center;color:#8a1c00">直径(mm)</span>
<span class="t s" style="left:191.5px;top:633px;width:36.5px;text-align:center;color:#000">级别</span>
<span class="t s" style="left:228px;top:633px;width:32.5px;text-align:center;color:#000">图号</span>
<span class="t s" style="left:260.5px;top:633px;width:201.0px;text-align:center;color:#000">图形</span>
<span class="t s" style="left:461.5px;top:633px;width:165.5px;text-align:center;color:#000">计算公式</span>
<span class="t s" style="left:627px;top:633px;width:156.5px;text-align:center;color:#000">公式描述</span>
<span class="t s" style="left:783.5px;top:633px;width:60.5px;text-align:center;color:#000">长度(mm)</span>
<div style="left:29px;top:650px;width:33.5px;height:137px;background:#ece9d8"></div>
<div style="left:62.5px;top:630px;width:1px;height:157px;background:#a8a8a8"></div>
<div style="left:135px;top:630px;width:1px;height:157px;background:#a8a8a8"></div>
<div style="left:191.5px;top:630px;width:1px;height:157px;background:#a8a8a8"></div>
<div style="left:228px;top:630px;width:1px;height:157px;background:#a8a8a8"></div>
<div style="left:260.5px;top:630px;width:1px;height:157px;background:#a8a8a8"></div>
<div style="left:461.5px;top:630px;width:1px;height:157px;background:#a8a8a8"></div>
<div style="left:627px;top:630px;width:1px;height:157px;background:#a8a8a8"></div>
<div style="left:783.5px;top:630px;width:1px;height:157px;background:#a8a8a8"></div>
<div style="left:844px;top:630px;width:1px;height:157px;background:#a8a8a8"></div>
<div style="left:29px;top:649.5px;width:835px;height:1px;background:#a8a8a8"></div>
<span class="t s" style="left:37px;top:657.0px;">15</span>
<span class="t s" style="left:64px;top:650.5px;line-height:13px">CT-1-1.桩间</span>
<span class="t s" style="left:64px;top:662.5px;line-height:13px">连接筋3.3</span>
<span class="t s" style="left:137px;top:657.0px;">25</span>
<span class="t s" style="left:204px;top:658.0px;font-size:10.5px;line-height:10px;height:11px;border-bottom:1.4px solid #000;font-family:'Liberation Sans',sans-serif">Φ</span>
<span class="t s" style="left:230px;top:657.0px;">1</span>
<span class="t s" style="left:261px;top:653.0px;width:200px;text-align:center;color:#c81e00;font-size:11px;font-family:'Liberation Sans',sans-serif">2586</span>
<div style="left:284px;top:667.0px;width:150px;height:2px;background:#000"></div>
<span class="t s" style="left:464px;top:657.0px;font-family:'Liberation Sans',sans-serif;font-size:11px">2586</span>
<span class="t s" style="left:629px;top:657.0px;">水平长度</span>
<span class="t s" style="left:786px;top:657.0px;font-family:'Liberation Sans',sans-serif;font-size:11px">2586</span>
<span class="t s" style="left:846px;top:657.0px;font-family:'Liberation Sans',sans-serif;font-size:11px">1</span>
<div style="left:29px;top:678.4px;width:835px;height:1px;background:#a8a8a8"></div>
<span class="t s" style="left:37px;top:685.9px;">16</span>
<span class="t s" style="left:64px;top:679.4px;line-height:13px">CT-1-1.底分</span>
<span class="t s" style="left:64px;top:691.4px;line-height:13px">布筋-1</span>
<span class="t s" style="left:137px;top:685.9px;">10</span>
<span class="t s" style="left:204px;top:686.9px;font-size:10.5px;line-height:10px;height:11px;border-bottom:1.4px solid #000;font-family:'Liberation Sans',sans-serif">Φ</span>
<span class="t s" style="left:230px;top:685.9px;">1</span>
<span class="t s" style="left:261px;top:681.9px;width:200px;text-align:center;color:#c81e00;font-size:11px;font-family:'Liberation Sans',sans-serif">1000</span>
<div style="left:284px;top:695.9px;width:150px;height:2px;background:#000"></div>
<span class="t s" style="left:464px;top:685.9px;font-family:'Liberation Sans',sans-serif;font-size:11px">1000</span>
<span class="t s" style="left:629px;top:685.9px;"></span>
<span class="t s" style="left:786px;top:685.9px;font-family:'Liberation Sans',sans-serif;font-size:11px">1000</span>
<span class="t s" style="left:846px;top:685.9px;font-family:'Liberation Sans',sans-serif;font-size:11px">27</span>
<div style="left:29px;top:707.3px;width:835px;height:1px;background:#a8a8a8"></div>
<span class="t s" style="left:37px;top:714.8px;">17</span>
<span class="t s" style="left:64px;top:708.3px;line-height:13px">CT-1-1.面分</span>
<span class="t s" style="left:64px;top:720.3px;line-height:13px">布筋-2</span>
<span class="t s" style="left:137px;top:714.8px;">10</span>
<span class="t s" style="left:204px;top:715.8px;font-size:10.5px;line-height:10px;height:11px;border-bottom:1.4px solid #000;font-family:'Liberation Sans',sans-serif">Φ</span>
<span class="t s" style="left:230px;top:714.8px;">1</span>
<span class="t s" style="left:261px;top:710.8px;width:200px;text-align:center;color:#c81e00;font-size:11px;font-family:'Liberation Sans',sans-serif">1000</span>
<div style="left:284px;top:724.8px;width:150px;height:2px;background:#000"></div>
<span class="t s" style="left:464px;top:714.8px;font-family:'Liberation Sans',sans-serif;font-size:11px">1000</span>
<span class="t s" style="left:629px;top:714.8px;"></span>
<span class="t s" style="left:786px;top:714.8px;font-family:'Liberation Sans',sans-serif;font-size:11px">1000</span>
<span class="t s" style="left:846px;top:714.8px;font-family:'Liberation Sans',sans-serif;font-size:11px">27</span>
<div style="left:29px;top:736.2px;width:835px;height:1px;background:#a8a8a8"></div>
<span class="t s" style="left:37px;top:743.7px;">18</span>
<span class="t s" style="left:64px;top:737.2px;line-height:13px">CT-1-2.桩间</span>
<span class="t s" style="left:64px;top:749.2px;line-height:13px">连接筋1.1</span>
<span class="t s" style="left:137px;top:743.7px;">20</span>
<span class="t s" style="left:204px;top:744.7px;font-size:10.5px;line-height:10px;height:11px;border-bottom:1.4px solid #000;font-family:'Liberation Sans',sans-serif">Φ</span>
<span class="t s" style="left:230px;top:743.7px;">1</span>
<span class="t s" style="left:261px;top:739.7px;width:200px;text-align:center;color:#c81e00;font-size:11px;font-family:'Liberation Sans',sans-serif">2575</span>
<div style="left:284px;top:753.7px;width:150px;height:2px;background:#000"></div>
<span class="t s" style="left:464px;top:743.7px;font-family:'Liberation Sans',sans-serif;font-size:11px">2575</span>
<span class="t s" style="left:629px;top:743.7px;">水平长度</span>
<span class="t s" style="left:786px;top:743.7px;font-family:'Liberation Sans',sans-serif;font-size:11px">2575</span>
<span class="t s" style="left:846px;top:743.7px;font-family:'Liberation Sans',sans-serif;font-size:11px">1</span>
<div style="left:29px;top:765.1px;width:835px;height:1px;background:#a8a8a8"></div>
<span class="t s" style="left:37px;top:772.6px;">19</span>
<span class="t s" style="left:64px;top:766.1px;line-height:13px">CT-1-2.桩间</span>
<span class="t s" style="left:64px;top:778.1px;line-height:13px">连接筋1.2</span>
<span class="t s" style="left:137px;top:772.6px;">20</span>
<span class="t s" style="left:204px;top:773.6px;font-size:10.5px;line-height:10px;height:11px;border-bottom:1.4px solid #000;font-family:'Liberation Sans',sans-serif">Φ</span>
<span class="t s" style="left:230px;top:772.6px;">1</span>
<span class="t s" style="left:261px;top:768.6px;width:200px;text-align:center;color:#c81e00;font-size:11px;font-family:'Liberation Sans',sans-serif">2921</span>
<div style="left:284px;top:782.6px;width:150px;height:2px;background:#000"></div>
<span class="t s" style="left:464px;top:772.6px;font-family:'Liberation Sans',sans-serif;font-size:11px">2921</span>
<span class="t s" style="left:629px;top:772.6px;">水平长度</span>
<span class="t s" style="left:786px;top:772.6px;font-family:'Liberation Sans',sans-serif;font-size:11px">2921</span>
<span class="t s" style="left:846px;top:772.6px;font-family:'Liberation Sans',sans-serif;font-size:11px">1</span>
<div style="left:135px;top:650px;width:1px;height:137px;background:#000"></div>
<span class="t s" style="left:850px;top:632px;">根</span>
<div style="left:28px;top:785px;width:837px;height:2px;background:#c4d2f2;border-top:1px solid #e8eefc"></div>
<div style="left:865px;top:630px;width:17px;height:157px;background:#f6f5ef;border-left:1px solid #d8d5c8"></div>
<div style="left:866px;top:631px;width:16px;height:16px;background:linear-gradient(#e2ebfd,#b9cdf7);border:1px solid #9db3e8;border-radius:2px"></div>
<svg style="left:866px;top:631px;" width="16" height="16" viewBox="0 0 16 16"><path d="M3 9L7.5 4.5L12 9" stroke="#3a5ea8" stroke-width="2.2" fill="none"/></svg>
<div style="left:866px;top:769px;width:16px;height:16px;background:linear-gradient(#e2ebfd,#b9cdf7);border:1px solid #9db3e8;border-radius:2px"></div>
<svg style="left:866px;top:769px;" width="16" height="16" viewBox="0 0 16 16"><path d="M3 5L7.5 9.5L12 5" stroke="#3a5ea8" stroke-width="2.2" fill="none"/></svg>
<div style="left:866px;top:703px;width:16px;height:9px;background:linear-gradient(90deg,#c4d4fa,#b0c4f4);border:1px solid #9db3e8;border-radius:2px"></div>
<div style="left:888px;top:0px;width:405px;height:787px;background:#f1f1f1"></div>
<svg style="left:1089px;top:2px;" width="10" height="14" viewBox="0 0 10 14"><path d="M2 2L8 7L2 12" stroke="#666" stroke-width="1.2" fill="none"/></svg>
<span class="t y" style="left:1108px;top:1px;color:#444;font-size:12px;line-height:14px">文件</span>
<span class="t y" style="left:1149px;top:1px;color:#444;font-size:12px;line-height:14px">查看</span>
<span class="t y" style="left:1190px;top:1px;color:#444;font-size:12px;line-height:14px">收藏</span>
<span class="t y" style="left:1231px;top:1px;color:#444;font-size:12px;line-height:14px">工具</span>
<span class="t y" style="left:1272px;top:1px;color:#444;font-size:12px;line-height:14px">帮助</span>
<div style="left:888px;top:26px;width:405px;height:27px;background:#fff;border-top:1px solid #c9c9c9;border-bottom:1px solid #d2d2d2"></div>
<span class="t y" style="left:888px;top:28px;font-size:16px;line-height:23px;color:#222;letter-spacing:-.55px">x.com<span style="color:#9a9a9a;letter-spacing:-.78px">/question/giml/list?__ClassCode=-1&amp;__I</span></span>
<svg style="left:1191px;top:33px;" width="14" height="14" viewBox="0 0 14 14"><path d="M0 0H6V6H0ZM8 0H14V6H8ZM0 8H6V14H0Z" fill="#3aaa5a"/><path d="M2 2H4V4H2ZM10 2H12V4H10ZM2 10H4V12H2Z" fill="#fff"/><path d="M8 8H10V10H8ZM11 8H14V10H11ZM8 11H10V14H8ZM11 11H13V13H11Z" fill="#3aaa5a"/></svg>
<svg style="left:1212px;top:31px;" width="16" height="18" viewBox="0 0 16 18"><path d="M10 0L1 10H7L4 18L15 6H9Z" fill="#2fbf5a"/></svg>
<div style="left:1232px;top:27px;width:1px;height:25px;background:#e2e2e2"></div>
<svg style="left:1237px;top:35px;" width="14" height="9" viewBox="0 0 14 9"><path d="M1 1L7 7L13 1" stroke="#444" stroke-width="1.8" fill="none"/></svg>
<div style="left:1257px;top:27px;width:1px;height:25px;background:#e2e2e2"></div>
<svg style="left:1262px;top:31px;" width="18" height="18" viewBox="0 0 18 18"><rect x=".5" y=".5" width="16" height="16" fill="#fff" stroke="#2030d0"/><ellipse cx="8.5" cy="11.5" rx="4" ry="3" fill="#2030d0"/><circle cx="4" cy="7" r="1.7" fill="#2030d0"/><circle cx="7" cy="4.5" r="1.7" fill="#2030d0"/><circle cx="10.5" cy="4.5" r="1.7" fill="#2030d0"/><circle cx="13.3" cy="7" r="1.7" fill="#2030d0"/></svg>
<svg style="left:1282px;top:44px;" width="6" height="4" viewBox="0 0 6 4"><path d="M0 0H6L3 4Z" fill="#555"/></svg>
<span class="t y" style="left:1290px;top:33px;color:#666;font-size:12px">点</span>
<div style="left:888px;top:65px;width:6px;height:12px;background:#2a7ad8"></div>
<span class="t y" style="left:896px;top:65px;color:#333;letter-spacing:-.4px">139邮箱</span>
<svg style="left:947px;top:67px;" width="13" height="10" viewBox="0 0 13 10"><path d="M1 .5L5.5 5L1 9.5M7 .5L11.5 5L7 9.5" stroke="#888" stroke-width="1.1" fill="none"/></svg>
<div style="left:992px;top:66px;width:3px;height:13px;background:repeating-linear-gradient(#cdcdcd 0 3px,transparent 3px 5px)"></div>
<svg style="left:1009px;top:64px;" width="16" height="16" viewBox="0 0 16 16"><rect x=".5" y=".5" width="6" height="6" fill="#b4dcfa" stroke="#4a9ae0"/><rect x=".5" y="8.5" width="6" height="6" fill="#a8e8b8" stroke="#3ab860"/><rect x="8.5" y="8.5" width="6" height="6" fill="#f8b4a4" stroke="#e86850"/><path d="M11.5 0L15 3.5L11.5 7L8 3.5Z" fill="#fadc70" stroke="#e0a010"/></svg>
<span class="t y" style="left:1027px;top:65px;color:#333">扩展</span>
<svg style="left:1060px;top:69px;" width="9" height="5" viewBox="0 0 9 5"><path d="M0 0H9L4.5 5Z" fill="#777"/></svg>
<svg style="left:1078px;top:63px;" width="17" height="17" viewBox="0 0 17 17"><path d="M8.5 1L15 3.5V9Q15 14 8.5 16Q2 14 2 9V3.5Z" fill="#d8f4e4" stroke="#2aaa6a" stroke-width="1.2"/><path d="M6 5L8.5 8L11 5M8.5 8V13M6 9H11M6 11H11" stroke="#2aaa6a" fill="none"/></svg>
<span class="t y" style="left:1097px;top:65px;color:#333">网银</span>
<svg style="left:1130px;top:69px;" width="9" height="5" viewBox="0 0 9 5"><path d="M0 0H9L4.5 5Z" fill="#777"/></svg>
<svg style="left:1147px;top:63px;" width="17" height="17" viewBox="0 0 17 17"><rect x=".5" y=".5" width="16" height="16" rx="2" fill="#fde4e0" stroke="#e89a90"/><text x="2" y="12.5" font-size="10" fill="#e05040" font-family="Liberation Sans,sans-serif">Aa</text></svg>
<span class="t y" style="left:1166px;top:65px;color:#333">翻译</span>
<svg style="left:1200px;top:69px;" width="9" height="5" viewBox="0 0 9 5"><path d="M0 0H9L4.5 5Z" fill="#777"/></svg>
<svg style="left:1217px;top:63px;" width="17" height="17" viewBox="0 0 17 17"><rect x=".5" y=".5" width="16" height="16" fill="#fdeec0" stroke="#e8b830" stroke-dasharray="2 1.5"/><circle cx="9" cy="12" r="2" fill="none" stroke="#d89010"/><circle cx="13" cy="12" r="2" fill="none" stroke="#d89010"/><path d="M9 10L12 5M13 10L10 5" stroke="#d89010"/></svg>
<span class="t y" style="left:1237px;top:65px;color:#333">截图</span>
<svg style="left:1270px;top:69px;" width="9" height="5" viewBox="0 0 9 5"><path d="M0 0H9L4.5 5Z" fill="#777"/></svg>
<div style="left:1287px;top:64px;width:8px;height:14px;background:#e8e8e8;border:1px solid #aaa;border-radius:2px"></div>
<div style="left:888px;top:118px;width:405px;height:1px;background:#cfcfcf"></div>
<div style="left:888px;top:90px;width:6px;height:29px;background:#fafafa;border:1px solid #cfcfcf;border-left:0;border-bottom:0;border-radius:0 4px 0 0"></div>
<div style="left:893px;top:90px;width:222px;height:30px;background:#fff;border:1px solid #c8c8c8;border-bottom:0;border-radius:5px 5px 0 0"></div>
<svg style="left:904px;top:96px;" width="18" height="18" viewBox="0 0 18 18"><rect x="1" y="8" width="16" height="9" rx="3" fill="#2a8ae0"/><ellipse cx="9" cy="6" rx="6" ry="5" fill="#5ab0f0" stroke="#2a8ae0"/><ellipse cx="9" cy="12.5" rx="3.5" ry="2" fill="none" stroke="#fff" stroke-width="1.2"/></svg>
<span class="t y" style="left:925px;top:98px;color:#222;width:166px;overflow:hidden;display:block">专业造价问题答疑平台<span style="letter-spacing:2.5px;margin-left:2px">-</span>广联达服务</span>
<svg style="left:1094px;top:100px;" width="10" height="10" viewBox="0 0 10 10"><path d="M1 1L9 9M9 1L1 9" stroke="#888" stroke-width="1.2"/></svg>
<svg style="left:1122px;top:99px;" width="12" height="12" viewBox="0 0 12 12"><path d="M6 0V12M0 6H12" stroke="#666" stroke-width="1.8"/></svg>
<div style="left:1140px;top:94px;width:1px;height:24px;background:#d8d8d8"></div>
<div style="left:888px;top:119px;width:6px;height:668px;background:#fff"></div>
<div style="left:894px;top:120px;width:399px;height:376px;background:#000"></div>
<div style="left:894px;top:496px;width:399px;height:22px;background:#fff"></div>
<div style="left:894px;top:518px;width:399px;height:269px;background:#000"></div>
<svg style="left:894px;top:119px;" width="399" height="377" viewBox="894 119 399 377"><defs><pattern id="spk" width="32" height="32" patternUnits="userSpaceOnUse"><rect x="10.4" y="4.8" width="1.2" height="1.2" fill="#40d8d0"/><rect x="20.8" y="2.3" width="1.2" height="1.2" fill="#40d8d0"/><rect x="17.1" y="11.7" width="1.2" height="1.2" fill="#40d8d0"/><rect x="1.9" y="16.2" width="1.2" height="1.2" fill="#40d8d0"/><rect x="1.2" y="13.9" width="1.2" height="1.2" fill="#40d8d0"/><rect x="2.2" y="2.9" width="1.2" height="1.2" fill="#40d8d0"/><rect x="13.6" y="26.5" width="1.2" height="1.2" fill="#40d8d0"/><rect x="4.0" y="7.1" width="1.2" height="1.2" fill="#40d8d0"/><rect x="20.1" y="30.3" width="1.2" height="1.2" fill="#40d8d0"/><rect x="18.5" y="12.7" width="1.2" height="1.2" fill="#40d8d0"/><rect x="31.2" y="1.5" width="1.2" height="1.2" fill="#40d8d0"/><rect x="27.5" y="9.3" width="1.2" height="1.2" fill="#40d8d0"/><rect x="4.6" y="3.8" width="1.2" height="1.2" fill="#40d8d0"/><rect x="9.9" y="26.1" width="1.2" height="1.2" fill="#40d8d0"/><rect x="5.8" y="18.6" width="1.2" height="1.2" fill="#40d8d0"/><rect x="20.4" y="11.9" width="1.2" height="1.2" fill="#40d8d0"/><rect x="17.5" y="2.0" width="1.2" height="1.2" fill="#40d8d0"/><rect x="1.9" y="6.6" width="1.2" height="1.2" fill="#40d8d0"/><rect x="21.8" y="13.7" width="1.2" height="1.2" fill="#40d8d0"/><rect x="10.1" y="18.7" width="1.2" height="1.2" fill="#40d8d0"/><rect x="14.5" y="9.6" width="1.2" height="1.2" fill="#40d8d0"/><rect x="25.4" y="22.4" width="1.2" height="1.2" fill="#40d8d0"/><rect x="7.8" y="18.4" width="1.2" height="1.2" fill="#40d8d0"/><rect x="16.8" y="28.0" width="1.2" height="1.2" fill="#40d8d0"/><rect x="23.3" y="9.2" width="1.2" height="1.2" fill="#40d8d0"/><rect x="31.4" y="3.8" width="1.2" height="1.2" fill="#40d8d0"/><rect x="13.4" y="24.2" width="1.2" height="1.2" fill="#40d8d0"/><rect x="4.9" y="15.6" width="1.2" height="1.2" fill="#40d8d0"/><rect x="1.3" y="21.4" width="1.2" height="1.2" fill="#40d8d0"/><rect x="24.5" y="18.3" width="1.2" height="1.2" fill="#40d8d0"/><rect x="28.0" y="10.0" width="1.2" height="1.2" fill="#40d8d0"/><rect x="22.2" y="19.0" width="1.2" height="1.2" fill="#40d8d0"/><rect x="18.6" y="14.6" width="1.2" height="1.2" fill="#40d8d0"/><rect x="26.9" y="30.2" width="1.2" height="1.2" fill="#40d8d0"/><rect x="15.2" y="21.3" width="1.2" height="1.2" fill="#40d8d0"/><rect x="1.9" y="22.4" width="1.2" height="1.2" fill="#40d8d0"/><rect x="20.7" y="31.8" width="1.2" height="1.2" fill="#40d8d0"/><rect x="26.3" y="9.1" width="1.2" height="1.2" fill="#40d8d0"/><rect x="12.3" y="21.4" width="1.2" height="1.2" fill="#40d8d0"/><rect x="0.7" y="14.8" width="1.2" height="1.2" fill="#40d8d0"/><rect x="5.4" y="3.7" width="1.2" height="1.2" fill="#40d8d0"/><rect x="1.9" y="24.6" width="1.2" height="1.2" fill="#40d8d0"/><rect x="4.1" y="7.9" width="1.2" height="1.2" fill="#40d8d0"/><rect x="12.5" y="27.9" width="1.2" height="1.2" fill="#40d8d0"/><rect x="2.6" y="14.4" width="1.2" height="1.2" fill="#40d8d0"/><rect x="17.6" y="28.3" width="1.2" height="1.2" fill="#40d8d0"/><rect x="26.2" y="27.6" width="1.2" height="1.2" fill="#40d8d0"/><rect x="8.9" y="13.3" width="1.2" height="1.2" fill="#40d8d0"/><rect x="11.5" y="28.3" width="1.2" height="1.2" fill="#40d8d0"/><rect x="30.6" y="4.8" width="1.2" height="1.2" fill="#40d8d0"/><rect x="5.6" y="7.4" width="1.2" height="1.2" fill="#40d8d0"/><rect x="7.5" y="15.5" width="1.2" height="1.2" fill="#40d8d0"/><rect x="18.9" y="8.4" width="1.2" height="1.2" fill="#40d8d0"/><rect x="0.1" y="13.4" width="1.2" height="1.2" fill="#40d8d0"/><rect x="11.8" y="18.1" width="1.2" height="1.2" fill="#40d8d0"/><rect x="30.5" y="22.1" width="1.2" height="1.2" fill="#40d8d0"/><rect x="16.5" y="19.8" width="1.2" height="1.2" fill="#40d8d0"/><rect x="21.6" y="1.7" width="1.2" height="1.2" fill="#40d8d0"/><rect x="28.8" y="25.0" width="1.2" height="1.2" fill="#40d8d0"/><rect x="28.0" y="25.5" width="1.2" height="1.2" fill="#40d8d0"/><rect x="12.6" y="12.8" width="1.2" height="1.2" fill="#40d8d0"/><rect x="3.3" y="20.3" width="1.2" height="1.2" fill="#40d8d0"/><rect x="2.0" y="2.2" width="1.2" height="1.2" fill="#40d8d0"/><rect x="6.7" y="5.2" width="1.2" height="1.2" fill="#40d8d0"/><rect x="10.9" y="1.7" width="1.2" height="1.2" fill="#40d8d0"/><rect x="0.0" y="4.8" width="1.2" height="1.2" fill="#40d8d0"/><rect x="3.2" y="11.6" width="1.2" height="1.2" fill="#40d8d0"/><rect x="0.8" y="28.0" width="1.2" height="1.2" fill="#40d8d0"/><rect x="19.7" y="4.8" width="1.2" height="1.2" fill="#40d8d0"/><rect x="8.1" y="11.1" width="1.2" height="1.2" fill="#40d8d0"/><rect x="11.7" y="3.9" width="1.2" height="1.2" fill="#40d8d0"/><rect x="27.2" y="31.8" width="1.2" height="1.2" fill="#40d8d0"/><rect x="14.9" y="15.5" width="1.2" height="1.2" fill="#40d8d0"/><rect x="2.7" y="3.3" width="1.2" height="1.2" fill="#40d8d0"/><rect x="11.0" y="8.5" width="1.2" height="1.2" fill="#40d8d0"/><rect x="26.5" y="5.2" width="1.2" height="1.2" fill="#40d8d0"/><rect x="0.7" y="30.4" width="1.2" height="1.2" fill="#40d8d0"/><rect x="16.9" y="4.7" width="1.2" height="1.2" fill="#40d8d0"/><rect x="17.4" y="0.9" width="1.2" height="1.2" fill="#40d8d0"/><rect x="16.9" y="31.3" width="1.2" height="1.2" fill="#40d8d0"/><rect x="27.6" y="22.3" width="1.2" height="1.2" fill="#40d8d0"/><rect x="8.4" y="11.7" width="1.2" height="1.2" fill="#40d8d0"/><rect x="5.3" y="24.7" width="1.2" height="1.2" fill="#40d8d0"/><rect x="17.0" y="24.9" width="1.2" height="1.2" fill="#40d8d0"/><rect x="10.5" y="7.1" width="1.2" height="1.2" fill="#40d8d0"/><rect x="26.0" y="31.5" width="1.2" height="1.2" fill="#40d8d0"/><rect x="27.3" y="25.8" width="1.2" height="1.2" fill="#40d8d0"/><rect x="26.2" y="23.7" width="1.2" height="1.2" fill="#40d8d0"/><rect x="7.3" y="16.6" width="1.2" height="1.2" fill="#40d8d0"/><rect x="11.4" y="0.9" width="1.2" height="1.2" fill="#40d8d0"/><rect x="0.9" y="8.9" width="1.2" height="1.2" fill="#40d8d0"/><rect x="8.3" y="22.2" width="1.2" height="1.2" fill="#40d8d0"/><rect x="30.6" y="14.3" width="1.2" height="1.2" fill="#40d8d0"/><rect x="30.0" y="31.6" width="1.2" height="1.2" fill="#40d8d0"/><rect x="30.6" y="11.7" width="1.2" height="1.2" fill="#40d8d0"/><rect x="7.1" y="7.3" width="1.2" height="1.2" fill="#40d8d0"/><rect x="6.3" y="6.5" width="1.2" height="1.2" fill="#40d8d0"/><rect x="20.0" y="28.8" width="1.2" height="1.2" fill="#40d8d0"/><rect x="26.9" y="15.3" width="1.2" height="1.2" fill="#40d8d0"/><rect x="20.9" y="25.6" width="1.2" height="1.2" fill="#40d8d0"/><rect x="2.7" y="21.1" width="1.2" height="1.2" fill="#40d8d0"/><rect x="29.1" y="25.0" width="1.2" height="1.2" fill="#40d8d0"/><rect x="24.0" y="15.3" width="1.2" height="1.2" fill="#40d8d0"/><rect x="5.7" y="25.3" width="1.2" height="1.2" fill="#40d8d0"/><rect x="10.6" y="25.6" width="1.2" height="1.2" fill="#40d8d0"/><rect x="31.1" y="12.7" width="1.2" height="1.2" fill="#40d8d0"/><rect x="12.8" y="30.3" width="1.2" height="1.2" fill="#40d8d0"/><rect x="23.2" y="5.4" width="1.2" height="1.2" fill="#40d8d0"/><rect x="4.1" y="4.8" width="1.2" height="1.2" fill="#40d8d0"/><rect x="29.0" y="25.8" width="1.2" height="1.2" fill="#40d8d0"/><rect x="4.7" y="26.4" width="1.2" height="1.2" fill="#40d8d0"/><rect x="31.4" y="21.0" width="1.2" height="1.2" fill="#40d8d0"/><rect x="11.2" y="17.6" width="1.2" height="1.2" fill="#40d8d0"/><rect x="4.2" y="0.5" width="1.2" height="1.2" fill="#40d8d0"/><rect x="31.1" y="20.8" width="1.2" height="1.2" fill="#40d8d0"/><rect x="16.9" y="29.9" width="1.2" height="1.2" fill="#40d8d0"/><rect x="13.9" y="27.9" width="1.2" height="1.2" fill="#40d8d0"/><rect x="26.4" y="6.8" width="1.2" height="1.2" fill="#40d8d0"/><rect x="8.1" y="9.4" width="1.2" height="1.2" fill="#40d8d0"/><rect x="7.7" y="18.8" width="1.2" height="1.2" fill="#40d8d0"/><rect x="8.3" y="13.4" width="1.2" height="1.2" fill="#40d8d0"/><rect x="4.2" y="29.1" width="1.2" height="1.2" fill="#40d8d0"/><rect x="11.3" y="14.7" width="1.2" height="1.2" fill="#40d8d0"/><rect x="18.7" y="28.9" width="1.2" height="1.2" fill="#40d8d0"/><rect x="13.5" y="29.4" width="1.2" height="1.2" fill="#40d8d0"/><rect x="16.1" y="17.0" width="1.2" height="1.2" fill="#40d8d0"/><rect x="16.8" y="0.6" width="1.2" height="1.2" fill="#40d8d0"/><rect x="14.1" y="5.9" width="1.2" height="1.2" fill="#40d8d0"/><rect x="0.1" y="25.6" width="1.2" height="1.2" fill="#40d8d0"/><rect x="5.5" y="15.2" width="1.2" height="1.2" fill="#40d8d0"/><rect x="23.2" y="17.8" width="1.2" height="1.2" fill="#40d8d0"/><rect x="10.4" y="16.6" width="1.2" height="1.2" fill="#40d8d0"/><rect x="17.8" y="25.1" width="1.2" height="1.2" fill="#40d8d0"/><rect x="3.4" y="17.9" width="1.2" height="1.2" fill="#40d8d0"/><rect x="8.0" y="8.9" width="1.2" height="1.2" fill="#40d8d0"/><rect x="24.7" y="16.2" width="1.2" height="1.2" fill="#40d8d0"/><rect x="18.0" y="24.3" width="1.2" height="1.2" fill="#40d8d0"/><rect x="29.2" y="14.2" width="1.2" height="1.2" fill="#40d8d0"/><rect x="19.6" y="16.2" width="1.2" height="1.2" fill="#40d8d0"/><rect x="16.4" y="22.2" width="1.2" height="1.2" fill="#40d8d0"/><rect x="14.5" y="17.1" width="1.2" height="1.2" fill="#40d8d0"/><rect x="15.3" y="30.1" width="1.2" height="1.2" fill="#40d8d0"/><rect x="22.4" y="28.0" width="1.2" height="1.2" fill="#40d8d0"/><rect x="30.1" y="8.3" width="1.2" height="1.2" fill="#40d8d0"/><rect x="17.9" y="30.2" width="1.2" height="1.2" fill="#40d8d0"/><rect x="26.9" y="4.4" width="1.2" height="1.2" fill="#40d8d0"/><rect x="3.9" y="14.1" width="1.2" height="1.2" fill="#40d8d0"/><rect x="2.3" y="7.7" width="1.2" height="1.2" fill="#40d8d0"/><rect x="2.3" y="21.4" width="1.2" height="1.2" fill="#40d8d0"/><rect x="25.1" y="28.7" width="1.2" height="1.2" fill="#40d8d0"/><rect x="4.9" y="22.9" width="1.2" height="1.2" fill="#40d8d0"/><rect x="21.1" y="4.6" width="1.2" height="1.2" fill="#40d8d0"/><rect x="28.3" y="31.0" width="1.2" height="1.2" fill="#40d8d0"/><rect x="7.0" y="30.5" width="1.2" height="1.2" fill="#40d8d0"/><rect x="12.7" y="15.6" width="1.2" height="1.2" fill="#40d8d0"/><rect x="31.7" y="26.6" width="1.2" height="1.2" fill="#40d8d0"/><rect x="5.2" y="13.8" width="1.2" height="1.2" fill="#40d8d0"/><rect x="16.5" y="10.9" width="1.2" height="1.2" fill="#40d8d0"/><rect x="6.3" y="10.2" width="1.2" height="1.2" fill="#40d8d0"/><rect x="23.1" y="0.6" width="1.2" height="1.2" fill="#40d8d0"/><rect x="17.7" y="14.1" width="1.2" height="1.2" fill="#40d8d0"/><rect x="0.6" y="10.6" width="1.2" height="1.2" fill="#40d8d0"/><rect x="20.0" y="16.4" width="1.2" height="1.2" fill="#40d8d0"/><rect x="2.1" y="31.5" width="1.2" height="1.2" fill="#40d8d0"/><rect x="25.2" y="31.1" width="1.2" height="1.2" fill="#40d8d0"/><rect x="3.4" y="8.5" width="1.2" height="1.2" fill="#40d8d0"/><rect x="1.3" y="24.9" width="1.2" height="1.2" fill="#40d8d0"/><rect x="8.7" y="4.1" width="1.2" height="1.2" fill="#40d8d0"/><rect x="13.5" y="29.2" width="1.2" height="1.2" fill="#40d8d0"/><rect x="26.2" y="8.3" width="1.2" height="1.2" fill="#40d8d0"/><rect x="4.8" y="29.4" width="1.2" height="1.2" fill="#40d8d0"/><rect x="18.3" y="22.4" width="1.2" height="1.2" fill="#40d8d0"/><rect x="2.9" y="1.8" width="1.2" height="1.2" fill="#40d8d0"/><rect x="22.0" y="13.6" width="1.2" height="1.2" fill="#40d8d0"/><rect x="2.3" y="30.0" width="1.2" height="1.2" fill="#40d8d0"/><rect x="20.3" y="25.7" width="1.2" height="1.2" fill="#40d8d0"/><rect x="2.7" y="27.4" width="1.2" height="1.2" fill="#40d8d0"/><rect x="2.1" y="27.6" width="1.2" height="1.2" fill="#40d8d0"/><rect x="14.5" y="10.9" width="1.2" height="1.2" fill="#40d8d0"/><rect x="17.7" y="29.7" width="1.2" height="1.2" fill="#40d8d0"/><rect x="8.6" y="4.1" width="1.2" height="1.2" fill="#40d8d0"/><rect x="16.9" y="7.6" width="1.2" height="1.2" fill="#40d8d0"/><rect x="3.5" y="5.2" width="1.2" height="1.2" fill="#40d8d0"/><rect x="1.6" y="6.5" width="1.2" height="1.2" fill="#40d8d0"/><rect x="10.0" y="9.8" width="1.2" height="1.2" fill="#40d8d0"/><rect x="24.3" y="9.3" width="1.2" height="1.2" fill="#40d8d0"/><rect x="16.0" y="5.7" width="1.2" height="1.2" fill="#40d8d0"/><rect x="11.1" y="0.6" width="1.2" height="1.2" fill="#40d8d0"/><rect x="8.0" y="0.5" width="1.2" height="1.2" fill="#40d8d0"/><rect x="23.5" y="17.6" width="1.2" height="1.2" fill="#40d8d0"/><rect x="6.1" y="15.2" width="1.2" height="1.2" fill="#40d8d0"/><rect x="29.9" y="3.4" width="1.2" height="1.2" fill="#40d8d0"/><rect x="26.2" y="13.8" width="1.2" height="1.2" fill="#40d8d0"/><rect x="15.8" y="26.7" width="1.2" height="1.2" fill="#40d8d0"/><rect x="12.6" y="16.2" width="1.2" height="1.2" fill="#40d8d0"/><rect x="22.0" y="31.4" width="1.2" height="1.2" fill="#40d8d0"/><rect x="11.0" y="26.6" width="1.2" height="1.2" fill="#40d8d0"/><rect x="22.6" y="20.4" width="1.2" height="1.2" fill="#40d8d0"/><rect x="13.0" y="11.1" width="1.2" height="1.2" fill="#40d8d0"/><rect x="1.7" y="4.2" width="1.2" height="1.2" fill="#40d8d0"/><rect x="2.3" y="23.7" width="1.2" height="1.2" fill="#40d8d0"/><rect x="8.2" y="5.2" width="1.2" height="1.2" fill="#40d8d0"/><rect x="2.7" y="26.9" width="1.2" height="1.2" fill="#40d8d0"/><rect x="27.9" y="21.5" width="1.2" height="1.2" fill="#40d8d0"/><rect x="9.0" y="7.8" width="1.2" height="1.2" fill="#40d8d0"/><rect x="9.4" y="14.7" width="1.2" height="1.2" fill="#40d8d0"/><rect x="5.0" y="14.3" width="1.2" height="1.2" fill="#40d8d0"/><rect x="8.4" y="30.8" width="1.2" height="1.2" fill="#40d8d0"/><rect x="31.1" y="17.5" width="1.2" height="1.2" fill="#40d8d0"/><rect x="7.8" y="30.9" width="1.2" height="1.2" fill="#40d8d0"/><rect x="9.9" y="11.4" width="1.2" height="1.2" fill="#40d8d0"/><rect x="0.0" y="12.2" width="1.2" height="1.2" fill="#40d8d0"/><rect x="15.2" y="16.1" width="1.2" height="1.2" fill="#40d8d0"/><rect x="6.4" y="16.2" width="1.2" height="1.2" fill="#40d8d0"/><rect x="0.2" y="8.5" width="1.2" height="1.2" fill="#40d8d0"/><rect x="2.9" y="12.8" width="1.2" height="1.2" fill="#40d8d0"/><rect x="1.3" y="0.7" width="1.2" height="1.2" fill="#40d8d0"/><rect x="9.7" y="7.4" width="1.2" height="1.2" fill="#40d8d0"/><rect x="18.7" y="16.9" width="1.2" height="1.2" fill="#40d8d0"/><rect x="24.0" y="21.0" width="1.2" height="1.2" fill="#40d8d0"/><rect x="22.9" y="28.1" width="1.2" height="1.2" fill="#40d8d0"/><rect x="12.5" y="10.4" width="1.2" height="1.2" fill="#40d8d0"/><rect x="31.5" y="4.8" width="1.2" height="1.2" fill="#40d8d0"/><rect x="23.2" y="20.6" width="1.2" height="1.2" fill="#40d8d0"/><rect x="1.4" y="26.7" width="1.2" height="1.2" fill="#40d8d0"/><rect x="28.5" y="20.1" width="1.2" height="1.2" fill="#40d8d0"/><rect x="23.5" y="26.0" width="1.2" height="1.2" fill="#40d8d0"/><rect x="4.5" y="16.8" width="1.2" height="1.2" fill="#40d8d0"/><rect x="16.1" y="26.7" width="1.2" height="1.2" fill="#40d8d0"/><rect x="25.7" y="26.4" width="1.2" height="1.2" fill="#40d8d0"/></pattern><pattern id="spk2" width="40" height="12" patternUnits="userSpaceOnUse"><rect x="23.4" y="10.7" width="1.3" height="1.3" fill="#dcdcdc"/><rect x="27.3" y="8.3" width="1.3" height="1.3" fill="#dcdcdc"/><rect x="9.2" y="0.4" width="1.3" height="1.3" fill="#dcdcdc"/><rect x="5.3" y="4.3" width="1.3" height="1.3" fill="#dcdcdc"/><rect x="4.2" y="10.0" width="1.3" height="1.3" fill="#dcdcdc"/><rect x="22.3" y="7.5" width="1.3" height="1.3" fill="#dcdcdc"/><rect x="25.0" y="8.2" width="1.3" height="1.3" fill="#dcdcdc"/><rect x="19.6" y="0.0" width="1.3" height="1.3" fill="#dcdcdc"/><rect x="31.9" y="9.0" width="1.3" height="1.3" fill="#dcdcdc"/><rect x="20.1" y="6.4" width="1.3" height="1.3" fill="#dcdcdc"/><rect x="26.4" y="0.8" width="1.3" height="1.3" fill="#dcdcdc"/><rect x="29.5" y="3.0" width="1.3" height="1.3" fill="#dcdcdc"/><rect x="3.0" y="3.2" width="1.3" height="1.3" fill="#dcdcdc"/><rect x="29.2" y="2.5" width="1.3" height="1.3" fill="#dcdcdc"/><rect x="29.6" y="11.7" width="1.3" height="1.3" fill="#dcdcdc"/><rect x="19.8" y="4.6" width="1.3" height="1.3" fill="#dcdcdc"/><rect x="19.2" y="8.2" width="1.3" height="1.3" fill="#dcdcdc"/><rect x="30.7" y="7.4" width="1.3" height="1.3" fill="#dcdcdc"/><rect x="25.7" y="0.9" width="1.3" height="1.3" fill="#dcdcdc"/><rect x="5.9" y="3.0" width="1.3" height="1.3" fill="#dcdcdc"/><rect x="29.7" y="3.7" width="1.3" height="1.3" fill="#dcdcdc"/><rect x="22.7" y="0.1" width="1.3" height="1.3" fill="#dcdcdc"/><rect x="2.4" y="3.2" width="1.3" height="1.3" fill="#dcdcdc"/><rect x="26.9" y="8.3" width="1.3" height="1.3" fill="#dcdcdc"/><rect x="27.0" y="3.5" width="1.3" height="1.3" fill="#dcdcdc"/><rect x="20.7" y="5.6" width="1.3" height="1.3" fill="#dcdcdc"/><rect x="18.7" y="1.4" width="1.3" height="1.3" fill="#dcdcdc"/><rect x="35.7" y="2.4" width="1.3" height="1.3" fill="#dcdcdc"/><rect x="39.1" y="11.2" width="1.3" height="1.3" fill="#dcdcdc"/><rect x="0.7" y="5.5" width="1.3" height="1.3" fill="#dcdcdc"/><rect x="32.8" y="11.6" width="1.3" height="1.3" fill="#dcdcdc"/><rect x="18.0" y="3.2" width="1.3" height="1.3" fill="#dcdcdc"/><rect x="8.4" y="11.3" width="1.3" height="1.3" fill="#dcdcdc"/><rect x="8.4" y="7.0" width="1.3" height="1.3" fill="#dcdcdc"/><rect x="5.7" y="6.3" width="1.3" height="1.3" fill="#dcdcdc"/><rect x="38.1" y="1.6" width="1.3" height="1.3" fill="#dcdcdc"/><rect x="32.8" y="6.1" width="1.3" height="1.3" fill="#dcdcdc"/><rect x="35.5" y="8.4" width="1.3" height="1.3" fill="#dcdcdc"/><rect x="9.3" y="10.8" width="1.3" height="1.3" fill="#dcdcdc"/><rect x="19.4" y="0.3" width="1.3" height="1.3" fill="#dcdcdc"/><rect x="0.1" y="5.9" width="1.3" height="1.3" fill="#dcdcdc"/><rect x="18.0" y="3.6" width="1.3" height="1.3" fill="#dcdcdc"/><rect x="5.6" y="4.1" width="1.3" height="1.3" fill="#dcdcdc"/><rect x="12.6" y="10.1" width="1.3" height="1.3" fill="#dcdcdc"/><rect x="0.1" y="9.0" width="1.3" height="1.3" fill="#dcdcdc"/><rect x="33.6" y="1.4" width="1.3" height="1.3" fill="#dcdcdc"/><rect x="37.1" y="8.6" width="1.3" height="1.3" fill="#dcdcdc"/><rect x="36.1" y="3.5" width="1.3" height="1.3" fill="#dcdcdc"/><rect x="14.9" y="4.7" width="1.3" height="1.3" fill="#dcdcdc"/><rect x="40.0" y="7.1" width="1.3" height="1.3" fill="#dcdcdc"/><rect x="14.4" y="5.1" width="1.3" height="1.3" fill="#dcdcdc"/><rect x="11.0" y="0.6" width="1.3" height="1.3" fill="#dcdcdc"/><rect x="4.1" y="10.0" width="1.3" height="1.3" fill="#dcdcdc"/><rect x="11.4" y="11.2" width="1.3" height="1.3" fill="#dcdcdc"/><rect x="10.0" y="3.2" width="1.3" height="1.3" fill="#dcdcdc"/><rect x="20.4" y="2.3" width="1.3" height="1.3" fill="#dcdcdc"/><rect x="14.9" y="11.5" width="1.3" height="1.3" fill="#dcdcdc"/><rect x="35.4" y="9.7" width="1.3" height="1.3" fill="#dcdcdc"/><rect x="25.2" y="11.0" width="1.3" height="1.3" fill="#dcdcdc"/><rect x="37.6" y="6.6" width="1.3" height="1.3" fill="#dcdcdc"/><rect x="28.8" y="0.6" width="1.3" height="1.3" fill="#dcdcdc"/><rect x="29.3" y="5.4" width="1.3" height="1.3" fill="#dcdcdc"/><rect x="30.1" y="7.7" width="1.3" height="1.3" fill="#dcdcdc"/><rect x="11.4" y="0.6" width="1.3" height="1.3" fill="#dcdcdc"/><rect x="37.1" y="1.5" width="1.3" height="1.3" fill="#dcdcdc"/><rect x="18.9" y="4.1" width="1.3" height="1.3" fill="#dcdcdc"/><rect x="11.9" y="8.9" width="1.3" height="1.3" fill="#dcdcdc"/><rect x="39.1" y="3.1" width="1.3" height="1.3" fill="#dcdcdc"/><rect x="26.2" y="3.6" width="1.3" height="1.3" fill="#dcdcdc"/><rect x="22.3" y="4.7" width="1.3" height="1.3" fill="#dcdcdc"/><rect x="6.7" y="1.9" width="1.3" height="1.3" fill="#dcdcdc"/><rect x="8.3" y="10.9" width="1.3" height="1.3" fill="#dcdcdc"/><rect x="19.9" y="2.6" width="1.3" height="1.3" fill="#dcdcdc"/><rect x="36.3" y="12.0" width="1.3" height="1.3" fill="#dcdcdc"/><rect x="18.0" y="1.7" width="1.3" height="1.3" fill="#dcdcdc"/><rect x="7.7" y="1.1" width="1.3" height="1.3" fill="#dcdcdc"/><rect x="13.7" y="1.1" width="1.3" height="1.3" fill="#dcdcdc"/><rect x="9.6" y="3.1" width="1.3" height="1.3" fill="#dcdcdc"/><rect x="22.8" y="10.6" width="1.3" height="1.3" fill="#dcdcdc"/><rect x="30.0" y="5.0" width="1.3" height="1.3" fill="#dcdcdc"/><rect x="16.6" y="6.3" width="1.3" height="1.3" fill="#dcdcdc"/><rect x="15.1" y="4.1" width="1.3" height="1.3" fill="#dcdcdc"/><rect x="2.5" y="3.3" width="1.3" height="1.3" fill="#dcdcdc"/><rect x="38.7" y="1.5" width="1.3" height="1.3" fill="#dcdcdc"/><rect x="20.1" y="7.6" width="1.3" height="1.3" fill="#dcdcdc"/><rect x="34.5" y="2.6" width="1.3" height="1.3" fill="#dcdcdc"/><rect x="10.8" y="3.0" width="1.3" height="1.3" fill="#dcdcdc"/><rect x="16.0" y="5.4" width="1.3" height="1.3" fill="#dcdcdc"/><rect x="38.2" y="10.2" width="1.3" height="1.3" fill="#dcdcdc"/><rect x="34.9" y="0.3" width="1.3" height="1.3" fill="#dcdcdc"/><rect x="1.3" y="8.5" width="1.3" height="1.3" fill="#dcdcdc"/><rect x="35.8" y="5.7" width="1.3" height="1.3" fill="#dcdcdc"/><rect x="23.5" y="0.0" width="1.3" height="1.3" fill="#dcdcdc"/><rect x="15.7" y="11.1" width="1.3" height="1.3" fill="#dcdcdc"/><rect x="33.0" y="10.3" width="1.3" height="1.3" fill="#dcdcdc"/><rect x="38.9" y="3.0" width="1.3" height="1.3" fill="#dcdcdc"/><rect x="4.4" y="1.9" width="1.3" height="1.3" fill="#dcdcdc"/><rect x="20.9" y="8.2" width="1.3" height="1.3" fill="#dcdcdc"/><rect x="37.7" y="8.7" width="1.3" height="1.3" fill="#dcdcdc"/><rect x="25.9" y="9.2" width="1.3" height="1.3" fill="#dcdcdc"/><rect x="18.3" y="6.6" width="1.3" height="1.3" fill="#dcdcdc"/><rect x="1.6" y="9.4" width="1.3" height="1.3" fill="#dcdcdc"/><rect x="9.3" y="11.0" width="1.3" height="1.3" fill="#dcdcdc"/><rect x="25.8" y="3.6" width="1.3" height="1.3" fill="#dcdcdc"/><rect x="5.1" y="3.0" width="1.3" height="1.3" fill="#dcdcdc"/><rect x="25.5" y="8.4" width="1.3" height="1.3" fill="#dcdcdc"/><rect x="4.5" y="0.8" width="1.3" height="1.3" fill="#dcdcdc"/><rect x="21.0" y="7.0" width="1.3" height="1.3" fill="#dcdcdc"/><rect x="15.5" y="2.7" width="1.3" height="1.3" fill="#dcdcdc"/><rect x="24.0" y="0.1" width="1.3" height="1.3" fill="#dcdcdc"/><rect x="12.1" y="5.5" width="1.3" height="1.3" fill="#dcdcdc"/><rect x="38.4" y="7.7" width="1.3" height="1.3" fill="#dcdcdc"/><rect x="35.4" y="5.7" width="1.3" height="1.3" fill="#dcdcdc"/><rect x="9.4" y="3.0" width="1.3" height="1.3" fill="#dcdcdc"/><rect x="38.4" y="8.5" width="1.3" height="1.3" fill="#dcdcdc"/><rect x="12.3" y="0.3" width="1.3" height="1.3" fill="#dcdcdc"/><rect x="19.9" y="8.1" width="1.3" height="1.3" fill="#dcdcdc"/><rect x="16.8" y="3.1" width="1.3" height="1.3" fill="#dcdcdc"/><rect x="26.7" y="11.1" width="1.3" height="1.3" fill="#dcdcdc"/><rect x="9.1" y="0.4" width="1.3" height="1.3" fill="#dcdcdc"/></pattern><clipPath id="hclip"><path d="M1105,385 A83,83 0 0 1 1186,271.5 L1218.7,330.5 L1218.7,385 Z"/></clipPath></defs><circle cx="893" cy="140" r="18" fill="none" stroke="#e6e6e6"/><line x1="897.0" y1="141.0" x2="902.0" y2="141.0" stroke="#e6e6e6" stroke-width="1" /><text x="1086.5" y="131" font-size="12" fill="#e6e6e6" font-family="Liberation Sans,sans-serif" textLength="20" lengthAdjust="spacingAndGlyphs">694</text><line x1="1064.0" y1="134.0" x2="1129.0" y2="134.0" stroke="#00e0e0" stroke-width="1" /><line x1="1067.0" y1="134.0" x2="1067.0" y2="163.0" stroke="#00e0e0" stroke-width="1" /><line x1="1126.0" y1="134.0" x2="1126.0" y2="163.0" stroke="#00e0e0" stroke-width="1" /><line x1="1064.0" y1="137.0" x2="1070.0" y2="131.0" stroke="#00e0e0" stroke-width="1.6" /><line x1="1123.0" y1="137.0" x2="1129.0" y2="131.0" stroke="#00e0e0" stroke-width="1.6" /><circle cx="1205" cy="137" r="20" fill="none" stroke="#e6e6e6"/><text x="1205" y="147" font-size="27" fill="#e6e6e6" font-family="Liberation Serif,serif" text-anchor="middle">5</text><line x1="933.7" y1="160.0" x2="933.7" y2="388.0" stroke="#3cd24c" stroke-width="1" /><line x1="925.0" y1="164.3" x2="955.0" y2="164.3" stroke="#3cd24c" stroke-width="1" /><line x1="930.5" y1="161.3" x2="937.0" y2="167.3" stroke="#3cd24c" stroke-width="1.6" /><line x1="925.0" y1="330.5" x2="951.0" y2="330.5" stroke="#3cd24c" stroke-width="1" /><line x1="930.5" y1="327.5" x2="937.0" y2="333.5" stroke="#3cd24c" stroke-width="1.6" /><line x1="925.0" y1="341.5" x2="951.0" y2="341.5" stroke="#3cd24c" stroke-width="1" /><line x1="930.5" y1="338.5" x2="937.0" y2="344.5" stroke="#3cd24c" stroke-width="1.6" /><line x1="925.0" y1="384.7" x2="951.0" y2="384.7" stroke="#3cd24c" stroke-width="1" /><line x1="930.5" y1="381.7" x2="937.0" y2="387.7" stroke="#3cd24c" stroke-width="1.6" /><line x1="894.0" y1="264.0" x2="901.0" y2="264.0" stroke="#e020e0" stroke-width="1" /><line x1="898.0" y1="257.0" x2="898.0" y2="264.0" stroke="#e020e0" stroke-width="1" /><text transform="translate(929.5,260) rotate(-90)" font-size="12" fill="#e6e6e6" font-family="Liberation Sans,sans-serif" textLength="26" lengthAdjust="spacingAndGlyphs">2000</text><text transform="translate(929.5,344) rotate(-90)" font-size="12" fill="#e6e6e6" font-family="Liberation Sans,sans-serif" textLength="17" lengthAdjust="spacingAndGlyphs">160</text><text transform="translate(929.5,375) rotate(-90)" font-size="12" fill="#e6e6e6" font-family="Liberation Sans,sans-serif" textLength="20" lengthAdjust="spacingAndGlyphs">600</text><path d="M1068,164.3 L1126,164.3 L1218.7,330.5 L1218.7,384.7 L976.5,384.7 L976.5,330.5 Z" fill="none" stroke="#d8b0b0"/><line x1="1068.0" y1="164.0" x2="1068.0" y2="394.0" stroke="#b8b8b8" stroke-width="1" /><line x1="976.5" y1="394.0" x2="1068.0" y2="394.0" stroke="#b8b8b8" stroke-width="1" /><line x1="976.5" y1="385.0" x2="976.5" y2="394.0" stroke="#b8b8b8" stroke-width="1" /><circle cx="1096.6" cy="212.9" r="24" fill="none" stroke="#e020e0" stroke-dasharray="7 3"/><line x1="1091.6" y1="212.9" x2="1101.6" y2="212.9" stroke="#e020e0" stroke-width="1.4" /><line x1="1096.6" y1="207.9" x2="1096.6" y2="217.9" stroke="#e020e0" stroke-width="1.4" /><circle cx="1024.4" cy="343" r="24" fill="none" stroke="#e020e0" stroke-dasharray="7 3"/><line x1="1019.4" y1="343.0" x2="1029.4" y2="343.0" stroke="#e020e0" stroke-width="1.4" /><line x1="1024.4" y1="338.0" x2="1024.4" y2="348.0" stroke="#e020e0" stroke-width="1.4" /><circle cx="1169" cy="343" r="24" fill="none" stroke="#e020e0" stroke-dasharray="7 3" opacity=".45"/><line x1="1164.0" y1="343.0" x2="1174.0" y2="343.0" stroke="#e020e0" stroke-width="1.4" /><line x1="1169.0" y1="338.0" x2="1169.0" y2="348.0" stroke="#e020e0" stroke-width="1.4" /><g clip-path="url(#hclip)"><line x1="1095.0" y1="307.2" x2="1225.0" y2="307.2" stroke="#ff1010" stroke-width="1.7" /><line x1="1095.0" y1="319.5" x2="1225.0" y2="319.5" stroke="#ff1010" stroke-width="1.7" /><line x1="1095.0" y1="331.8" x2="1225.0" y2="331.8" stroke="#ff1010" stroke-width="1.7" /><line x1="1095.0" y1="344.1" x2="1225.0" y2="344.1" stroke="#ff1010" stroke-width="1.7" /><line x1="1095.0" y1="356.4" x2="1225.0" y2="356.4" stroke="#ff1010" stroke-width="1.7" /><line x1="1095.0" y1="368.7" x2="1225.0" y2="368.7" stroke="#ff1010" stroke-width="1.7" /><line x1="1095.0" y1="381.0" x2="1225.0" y2="381.0" stroke="#ff1010" stroke-width="1.7" /><line x1="1094.7" y1="277.2" x2="1156.2" y2="387.2" stroke="#ff1010" stroke-width="1.6" /><line x1="1106.6" y1="277.2" x2="1168.1" y2="387.2" stroke="#ff1010" stroke-width="1.6" /><line x1="1118.9" y1="277.2" x2="1180.4" y2="387.2" stroke="#ff1010" stroke-width="1.6" /><line x1="1130.4" y1="277.2" x2="1191.9" y2="387.2" stroke="#ff1010" stroke-width="1.6" /><line x1="1141.8" y1="277.2" x2="1203.3" y2="387.2" stroke="#ff1010" stroke-width="1.6" /><line x1="1153.2" y1="277.2" x2="1214.7" y2="387.2" stroke="#ff1010" stroke-width="1.6" /><line x1="1164.7" y1="277.2" x2="1226.2" y2="387.2" stroke="#ff1010" stroke-width="1.6" /><line x1="1176.2" y1="277.2" x2="1237.7" y2="387.2" stroke="#ff1010" stroke-width="1.6" /><line x1="1185.7" y1="277.2" x2="1247.2" y2="387.2" stroke="#ff1010" stroke-width="1.6" /><line x1="1125.3" y1="300.0" x2="1125.3" y2="386.0" stroke="#ff1010" stroke-width="1.4" /><line x1="1136.7" y1="300.0" x2="1136.7" y2="386.0" stroke="#ff1010" stroke-width="1.4" /><line x1="1151.0" y1="300.0" x2="1151.0" y2="386.0" stroke="#ff1010" stroke-width="1.4" /><line x1="1128.0" y1="332.0" x2="1192.0" y2="277.0" stroke="#ff1010" stroke-width="1.2" /></g><path d="M1105,385 A83,83 0 0 1 1186,271.5" fill="none" stroke="#e6e6e6" stroke-width="1.2"/><rect x="1113" y="254.4" width="33" height="33" fill="#000"/><rect x="1113" y="254.4" width="33" height="33" fill="url(#spk)" stroke="#e6e6e6" stroke-width="1.3"/><rect x="1048" y="301" width="33" height="33" fill="#000"/><rect x="1048" y="301" width="33" height="33" fill="url(#spk)" stroke="#e6e6e6" stroke-width="1.3"/><line x1="1168.0" y1="276.0" x2="1257.0" y2="220.0" stroke="#d02020" stroke-width="1" /><text transform="translate(1184,258) rotate(-30)" font-size="11" fill="#e020e0" font-family="Liberation Sans,sans-serif" textLength="86" lengthAdjust="spacingAndGlyphs">φ10@200(上.下)</text><text x="1201" y="276" font-size="11.5" fill="#e020e0" font-family="Liberation Sans,sans-serif" textLength="75" lengthAdjust="spacingAndGlyphs">7⌽20@150(上)</text><line x1="1190.0" y1="277.7" x2="1272.0" y2="277.7" stroke="#d02020" stroke-width="1" /><line x1="1168.0" y1="291.0" x2="1190.0" y2="277.7" stroke="#d02020" stroke-width="1" /><text x="1201" y="292" font-size="11.5" fill="#e020e0" font-family="Liberation Sans,sans-serif" textLength="75" lengthAdjust="spacingAndGlyphs">7⌽25@150(下)</text><text x="948" y="365" font-size="17" fill="#00e0e0" font-family="Liberation Sans,sans-serif" textLength="23" lengthAdjust="spacingAndGlyphs">3a</text><line x1="945.0" y1="366.5" x2="962.0" y2="366.5" stroke="#00e0e0" stroke-width="1.6" /><text x="1239" y="365" font-size="17" fill="#00e0e0" font-family="Liberation Sans,sans-serif" textLength="23" lengthAdjust="spacingAndGlyphs">3a</text><line x1="1236.0" y1="366.5" x2="1253.0" y2="366.5" stroke="#00e0e0" stroke-width="1.6" /><line x1="973.0" y1="421.4" x2="1222.0" y2="421.4" stroke="#00e0e0" stroke-width="1" /><line x1="976.5" y1="390.0" x2="976.5" y2="424.0" stroke="#00e0e0" stroke-width="1" /><line x1="973.5" y1="424.5" x2="979.5" y2="418.5" stroke="#00e0e0" stroke-width="1.6" /><line x1="1024.4" y1="390.0" x2="1024.4" y2="424.0" stroke="#00e0e0" stroke-width="1" /><line x1="1021.4" y1="424.5" x2="1027.4" y2="418.5" stroke="#00e0e0" stroke-width="1.6" /><line x1="1169.0" y1="390.0" x2="1169.0" y2="424.0" stroke="#00e0e0" stroke-width="1" /><line x1="1166.0" y1="424.5" x2="1172.0" y2="418.5" stroke="#00e0e0" stroke-width="1.6" /><line x1="1218.7" y1="390.0" x2="1218.7" y2="424.0" stroke="#00e0e0" stroke-width="1" /><line x1="1215.7" y1="424.5" x2="1221.7" y2="418.5" stroke="#00e0e0" stroke-width="1.6" /><text x="990" y="419" font-size="12" fill="#e6e6e6" font-family="Liberation Sans,sans-serif" textLength="20" lengthAdjust="spacingAndGlyphs">600</text><text x="1084.5" y="419" font-size="12" fill="#e6e6e6" font-family="Liberation Sans,sans-serif" textLength="25" lengthAdjust="spacingAndGlyphs">1800</text><text x="1183.5" y="419" font-size="12" fill="#e6e6e6" font-family="Liberation Sans,sans-serif" textLength="19" lengthAdjust="spacingAndGlyphs">600</text><line x1="1125.4" y1="385.0" x2="1125.4" y2="445.0" stroke="#d02020" stroke-width="1" /><line x1="1125.4" y1="442.8" x2="1180.0" y2="442.8" stroke="#d02020" stroke-width="1" /><text x="1126.5" y="439" font-size="11.5" fill="#e020e0" font-family="Liberation Sans,sans-serif" textLength="73" lengthAdjust="spacingAndGlyphs">7⌽20@150(上)</text><text x="1126.5" y="461" font-size="11.5" fill="#e020e0" font-family="Liberation Sans,sans-serif" textLength="73" lengthAdjust="spacingAndGlyphs">7⌽25@150(下)</text><text x="1061" y="474" font-size="31" font-weight="bold" fill="#00e0e0" font-family="Liberation Serif,serif" textLength="65" lengthAdjust="spacingAndGlyphs">CT3a</text><line x1="1045.0" y1="484.3" x2="1131.0" y2="484.3" stroke="#00e0e0" stroke-width="4" /><line x1="1045.0" y1="489.5" x2="1131.0" y2="489.5" stroke="#9adada" stroke-width="1" /><text x="1143" y="488" font-size="17" fill="#00e0e0" font-family="Liberation Serif,serif" textLength="39" lengthAdjust="spacingAndGlyphs">1:50</text></svg>
<svg style="left:894px;top:518px;" width="399" height="269" viewBox="894 518 399 269"><circle cx="974" cy="526" r="19" fill="none" stroke="#e6e6e6"/><text x="974" y="536" font-size="27" fill="#e6e6e6" font-family="Liberation Serif,serif" text-anchor="middle">6</text><line x1="1084.9" y1="542.0" x2="1084.9" y2="605.7" stroke="#e6e6e6" stroke-width="1" /><line x1="1117.0" y1="542.0" x2="1117.0" y2="605.7" stroke="#e6e6e6" stroke-width="1" /><path d="M1079.8,542 H1095.7 L1097.7,535 L1100.7,550 L1102.7,542 H1124" fill="none" stroke="#e6e6e6"/><line x1="1148.0" y1="542.0" x2="1148.0" y2="605.7" stroke="#e6e6e6" stroke-width="1" /><line x1="1179.7" y1="542.0" x2="1179.7" y2="605.7" stroke="#e6e6e6" stroke-width="1" /><path d="M1142.5,542 H1157.7 L1159.7,535 L1162.7,550 L1164.7,542 H1188" fill="none" stroke="#e6e6e6"/><path d="M1014.9,698 V605.7 H1250 V698" fill="none" stroke="#e6e6e6"/><text x="986.5" y="579.5" font-size="11.5" fill="#e020e0" font-family="Liberation Sans,sans-serif" textLength="25" lengthAdjust="spacingAndGlyphs">7⌽20</text><line x1="982.0" y1="581.0" x2="1113.3" y2="581.0" stroke="#e6e6e6" stroke-width="1" /><text x="1256.6" y="579.5" font-size="11.5" fill="#e020e0" font-family="Liberation Sans,sans-serif" textLength="25" lengthAdjust="spacingAndGlyphs">7⌽20</text><line x1="1151.6" y1="581.0" x2="1293.0" y2="581.0" stroke="#e6e6e6" stroke-width="1" /><text x="1157.8" y="567.4" font-size="11.5" fill="#e020e0" font-family="Liberation Sans,sans-serif" textLength="25" lengthAdjust="spacingAndGlyphs">7⌽20</text><line x1="1141.8" y1="568.5" x2="1195.3" y2="568.5" stroke="#e6e6e6" stroke-width="1" /><line x1="1141.8" y1="568.5" x2="1141.8" y2="613.4" stroke="#e6e6e6" stroke-width="1" /><line x1="1025.8" y1="581.0" x2="1025.8" y2="616.0" stroke="#e6e6e6" stroke-width="1" /><circle cx="1025.8" cy="616" r="2.2" fill="#ff2020"/><line x1="1040.4" y1="581.0" x2="1040.4" y2="616.0" stroke="#e6e6e6" stroke-width="1" /><circle cx="1040.4" cy="616" r="2.2" fill="#ff2020"/><line x1="1055.7" y1="581.0" x2="1055.7" y2="616.0" stroke="#e6e6e6" stroke-width="1" /><circle cx="1055.7" cy="616" r="2.2" fill="#ff2020"/><line x1="1068.8" y1="581.0" x2="1068.8" y2="616.0" stroke="#e6e6e6" stroke-width="1" /><circle cx="1068.8" cy="616" r="2.2" fill="#ff2020"/><line x1="1082.3" y1="581.0" x2="1082.3" y2="616.0" stroke="#e6e6e6" stroke-width="1" /><circle cx="1082.3" cy="616" r="2.2" fill="#ff2020"/><line x1="1098.0" y1="581.0" x2="1098.0" y2="616.0" stroke="#e6e6e6" stroke-width="1" /><circle cx="1098" cy="616" r="2.2" fill="#ff2020"/><line x1="1113.3" y1="581.0" x2="1113.3" y2="616.0" stroke="#e6e6e6" stroke-width="1" /><circle cx="1113.3" cy="616" r="2.2" fill="#ff2020"/><line x1="1153.4" y1="581.0" x2="1153.4" y2="609.4" stroke="#e6e6e6" stroke-width="1" /><circle cx="1153.4" cy="609.4" r="2.2" fill="#ff2020"/><line x1="1166.9" y1="581.0" x2="1166.9" y2="609.4" stroke="#e6e6e6" stroke-width="1" /><circle cx="1166.9" cy="609.4" r="2.2" fill="#ff2020"/><line x1="1181.9" y1="581.0" x2="1181.9" y2="609.4" stroke="#e6e6e6" stroke-width="1" /><circle cx="1181.9" cy="609.4" r="2.2" fill="#ff2020"/><line x1="1196.0" y1="581.0" x2="1196.0" y2="609.4" stroke="#e6e6e6" stroke-width="1" /><circle cx="1196" cy="609.4" r="2.2" fill="#ff2020"/><line x1="1209.2" y1="581.0" x2="1209.2" y2="609.4" stroke="#e6e6e6" stroke-width="1" /><circle cx="1209.2" cy="609.4" r="2.2" fill="#ff2020"/><line x1="1222.7" y1="581.0" x2="1222.7" y2="609.4" stroke="#e6e6e6" stroke-width="1" /><circle cx="1222.7" cy="609.4" r="2.2" fill="#ff2020"/><line x1="1238.4" y1="581.0" x2="1238.4" y2="609.4" stroke="#e6e6e6" stroke-width="1" /><circle cx="1238.4" cy="609.4" r="2.2" fill="#ff2020"/><line x1="1022.0" y1="618.7" x2="1141.0" y2="618.7" stroke="#ff1010" stroke-width="2" /><line x1="1141.0" y1="612.4" x2="1241.0" y2="612.4" stroke="#ff1010" stroke-width="2" /><text x="986.5" y="651" font-size="11.5" fill="#e020e0" font-family="Liberation Sans,sans-serif" textLength="25" lengthAdjust="spacingAndGlyphs">7⌽25</text><line x1="982.0" y1="653.0" x2="1113.3" y2="653.0" stroke="#e6e6e6" stroke-width="1" /><text x="1256.6" y="651" font-size="11.5" fill="#e020e0" font-family="Liberation Sans,sans-serif" textLength="25" lengthAdjust="spacingAndGlyphs">7⌽25</text><line x1="1151.6" y1="653.0" x2="1293.0" y2="653.0" stroke="#e6e6e6" stroke-width="1" /><text x="1157.8" y="639" font-size="11.5" fill="#e020e0" font-family="Liberation Sans,sans-serif" textLength="25" lengthAdjust="spacingAndGlyphs">7⌽25</text><line x1="1141.8" y1="640.4" x2="1195.3" y2="640.4" stroke="#e6e6e6" stroke-width="1" /><line x1="1141.8" y1="640.4" x2="1141.8" y2="691.7" stroke="#e6e6e6" stroke-width="1" /><line x1="1025.8" y1="653.0" x2="1025.8" y2="680.5" stroke="#e6e6e6" stroke-width="1" /><circle cx="1025.8" cy="680.5" r="2.2" fill="#ff2020"/><line x1="1040.4" y1="653.0" x2="1040.4" y2="680.5" stroke="#e6e6e6" stroke-width="1" /><circle cx="1040.4" cy="680.5" r="2.2" fill="#ff2020"/><line x1="1055.7" y1="653.0" x2="1055.7" y2="680.5" stroke="#e6e6e6" stroke-width="1" /><circle cx="1055.7" cy="680.5" r="2.2" fill="#ff2020"/><line x1="1068.8" y1="653.0" x2="1068.8" y2="680.5" stroke="#e6e6e6" stroke-width="1" /><circle cx="1068.8" cy="680.5" r="2.2" fill="#ff2020"/><line x1="1082.3" y1="653.0" x2="1082.3" y2="680.5" stroke="#e6e6e6" stroke-width="1" /><circle cx="1082.3" cy="680.5" r="2.2" fill="#ff2020"/><line x1="1098.0" y1="653.0" x2="1098.0" y2="680.5" stroke="#e6e6e6" stroke-width="1" /><circle cx="1098" cy="680.5" r="2.2" fill="#ff2020"/><line x1="1113.3" y1="653.0" x2="1113.3" y2="680.5" stroke="#e6e6e6" stroke-width="1" /><circle cx="1113.3" cy="680.5" r="2.2" fill="#ff2020"/><line x1="1153.4" y1="653.0" x2="1153.4" y2="687.7" stroke="#e6e6e6" stroke-width="1" /><circle cx="1153.4" cy="687.7" r="2.2" fill="#ff2020"/><line x1="1166.9" y1="653.0" x2="1166.9" y2="687.7" stroke="#e6e6e6" stroke-width="1" /><circle cx="1166.9" cy="687.7" r="2.2" fill="#ff2020"/><line x1="1181.9" y1="653.0" x2="1181.9" y2="687.7" stroke="#e6e6e6" stroke-width="1" /><circle cx="1181.9" cy="687.7" r="2.2" fill="#ff2020"/><line x1="1196.0" y1="653.0" x2="1196.0" y2="687.7" stroke="#e6e6e6" stroke-width="1" /><circle cx="1196" cy="687.7" r="2.2" fill="#ff2020"/><line x1="1209.2" y1="653.0" x2="1209.2" y2="687.7" stroke="#e6e6e6" stroke-width="1" /><circle cx="1209.2" cy="687.7" r="2.2" fill="#ff2020"/><line x1="1222.7" y1="653.0" x2="1222.7" y2="687.7" stroke="#e6e6e6" stroke-width="1" /><circle cx="1222.7" cy="687.7" r="2.2" fill="#ff2020"/><line x1="1238.4" y1="653.0" x2="1238.4" y2="687.7" stroke="#e6e6e6" stroke-width="1" /><circle cx="1238.4" cy="687.7" r="2.2" fill="#ff2020"/><line x1="1022.0" y1="686.8" x2="1141.0" y2="686.8" stroke="#ff1010" stroke-width="2" /><line x1="1141.0" y1="690.7" x2="1241.0" y2="690.7" stroke="#ff1010" stroke-width="2" /><line x1="975.5" y1="602.0" x2="975.5" y2="714.0" stroke="#00e0e0" stroke-width="1" /><line x1="972.5" y1="608.0" x2="978.5" y2="602.0" stroke="#00e0e0" stroke-width="1.6" /><line x1="972.5" y1="701.0" x2="978.5" y2="695.0" stroke="#00e0e0" stroke-width="1.6" /><line x1="972.5" y1="714.0" x2="978.5" y2="708.0" stroke="#00e0e0" stroke-width="1.6" /><line x1="975.0" y1="605.0" x2="993.0" y2="605.0" stroke="#00e0e0" stroke-width="1" /><line x1="985.0" y1="692.0" x2="1008.0" y2="692.0" stroke="#00e0e0" stroke-width="1" /><line x1="943.0" y1="698.7" x2="1004.0" y2="698.7" stroke="#00e0e0" stroke-width="1" /><line x1="965.0" y1="711.0" x2="1004.0" y2="711.0" stroke="#00e0e0" stroke-width="1" /><line x1="990.0" y1="688.0" x2="996.0" y2="696.0" stroke="#00e0e0" stroke-width="1.6" /><line x1="987.0" y1="694.0" x2="993.0" y2="702.0" stroke="#00e0e0" stroke-width="1.6" /><text transform="translate(974,662) rotate(-90)" font-size="12" fill="#e6e6e6" font-family="Liberation Sans,sans-serif" textLength="25" lengthAdjust="spacingAndGlyphs">1200</text><text transform="translate(995,687) rotate(-90)" font-size="12" fill="#e6e6e6" font-family="Liberation Sans,sans-serif" textLength="13" lengthAdjust="spacingAndGlyphs">50</text><text transform="translate(971,713) rotate(-90)" font-size="12" fill="#e6e6e6" font-family="Liberation Sans,sans-serif" textLength="19" lengthAdjust="spacingAndGlyphs">100</text><text x="906" y="685" font-size="12" fill="#e03030" font-family="Liberation Sans,sans-serif" textLength="37" lengthAdjust="spacingAndGlyphs">-4.000</text><line x1="903.7" y1="686.7" x2="963.8" y2="686.7" stroke="#00e0e0" stroke-width="1" /><path d="M943.8,686.7 L954.7,698.7 L964.6,686.7" fill="none" stroke="#e6e6e6"/><rect x="1004" y="698.7" width="257.7" height="12" fill="#1a1a1a"/><rect x="1004" y="698.7" width="257.7" height="12" fill="url(#spk2)" stroke="#e6e6e6"/><rect x="1039.3" y="692.5" width="45.600000000000136" height="80" fill="#000"/><path d="M1039.3,771 V692.5 H1084.9 V771" fill="none" stroke="#e6e6e6"/><path d="M1039.3,771 Q1041.3,762 1056.1,762 Q1062.1,764 1062.1,771 Q1062.1,762 1076.9,762 Q1084.9,764 1084.9,771" fill="none" stroke="#e6e6e6"/><path d="M1039.3,771 Q1043.3,780 1058.1,778 Q1062.1,776 1062.1,771 Q1064.1,780 1078.9,778 Q1084.9,776 1084.9,771" fill="none" stroke="#e6e6e6"/><line x1="1061.6" y1="666.0" x2="1061.6" y2="787.0" stroke="#e6e6e6" stroke-width="1" stroke-dasharray="22 4 4 4"/><rect x="1179" y="692.5" width="46.59999999999991" height="80" fill="#000"/><path d="M1179,771 V692.5 H1225.6 V771" fill="none" stroke="#e6e6e6"/><path d="M1179,771 Q1181,762 1196.3,762 Q1202.3,764 1202.3,771 Q1202.3,762 1217.6,762 Q1225.6,764 1225.6,771" fill="none" stroke="#e6e6e6"/><path d="M1179,771 Q1183,780 1198.3,778 Q1202.3,776 1202.3,771 Q1204.3,780 1219.6,778 Q1225.6,776 1225.6,771" fill="none" stroke="#e6e6e6"/><line x1="1202.3" y1="666.0" x2="1202.3" y2="787.0" stroke="#e6e6e6" stroke-width="1" stroke-dasharray="22 4 4 4"/><text x="959.5" y="740" font-size="10" fill="#00e0e0" font-family="Liberation Serif,Noto Serif CJK SC,serif" font-weight="bold" textLength="48" lengthAdjust="spacingAndGlyphs">素混凝土垫层</text><line x1="959.0" y1="742.4" x2="1012.0" y2="742.4" stroke="#00e0e0" stroke-width="1" /><line x1="1012.0" y1="742.4" x2="1012.0" y2="711.0" stroke="#00e0e0" stroke-width="1" /><line x1="1010.0" y1="785.0" x2="1010.0" y2="787.0" stroke="#e6e6e6" stroke-width="1" /><line x1="1250.0" y1="783.0" x2="1250.0" y2="787.0" stroke="#e6e6e6" stroke-width="1" /></svg>
<div style="left:1081px;top:488px;width:212px;height:30px;background:#f0f0f0;border:1px solid #dcdcdc;border-right:0"></div>
<svg style="left:1091px;top:496px;" width="14" height="14" viewBox="0 0 14 14"><path d="M3 1H12V13H3V10M3 4V1" fill="none" stroke="#2aa84a" stroke-width="1.3"/><path d="M1 7H8M6 4.5L8.5 7L6 9.5" fill="none" stroke="#2aa84a" stroke-width="1.3"/></svg>
<span class="t y" style="left:1112px;top:496px;color:#333">发送到手机</span>
<div style="left:1182px;top:489px;width:1px;height:28px;background:#e0e0e0"></div>
<div style="left:1215px;top:489px;width:1px;height:28px;background:#e0e0e0"></div>
<div style="left:1247px;top:489px;width:1px;height:28px;background:#e0e0e0"></div>
<div style="left:1279px;top:489px;width:1px;height:28px;background:#e0e0e0"></div>
<svg style="left:1190px;top:496px;" width="18" height="14" viewBox="0 0 18 14"><path d="M5 12H14Q17 12 17 9Q17 6.5 14 6Q13 2 9.5 2Q6 2 5.5 6Q1.5 6 1.5 9Q1.5 12 5 12Z" fill="none" stroke="#2aa84a" stroke-width="1.2"/></svg>
<svg style="left:1224px;top:496px;" width="14" height="14" viewBox="0 0 14 14"><path d="M1 5V1H5M9 1H13V5M13 9V13H9M5 13H1V9M1 1L5.5 5.5M13 1L8.5 5.5M13 13L8.5 8.5M1 13L5.5 8.5" fill="none" stroke="#2aa84a" stroke-width="1.6"/></svg>
<svg style="left:1257px;top:496px;" width="14" height="14" viewBox="0 0 14 14"><path d="M1 1H11L13 3V13H1Z M4 1V5H10V1 M4 13V8H10V13" fill="none" stroke="#2aa84a" stroke-width="1.3"/></svg>
<svg style="left:1288px;top:496px;" width="8" height="14" viewBox="0 0 8 14"><path d="M1 1H8M1 1V13H8" fill="none" stroke="#2aa84a" stroke-width="1.3"/><path d="M3 10L6 6L8 8" fill="none" stroke="#2aa84a"/></svg>
<svg style="left:0px;top:0px;pointer-events:none" width="1293" height="787" viewBox="0 0 1293 787"><line x1="195.0" y1="632.0" x2="352.0" y2="476.0" stroke="#ff0a0a" stroke-width="3.6" /><polygon points="359.0,469.0 351.5,485.6 342.4,476.4" fill="#ff0a0a"/><line x1="177.5" y1="759.7" x2="578.0" y2="302.0" stroke="#ff0a0a" stroke-width="3.6" /><polygon points="584.0,295.0 577.7,312.1 567.9,303.5" fill="#ff0a0a"/><line x1="177.5" y1="700.5" x2="1180.0" y2="183.5" stroke="#14f014" stroke-width="3.6" /><polygon points="1189.0,179.0 1176.2,193.5 1169.8,181.0" fill="#14f014"/><line x1="1187.0" y1="180.0" x2="1198.5" y2="221.0" stroke="#14f014" stroke-width="3.6" /><polygon points="1201.5,231.0 1190.3,216.4 1203.8,212.8" fill="#14f014"/><ellipse cx="162" cy="644" rx="44" ry="29" fill="none" stroke="#ff0a0a" stroke-width="3.4"/><ellipse cx="111" cy="702.5" rx="68" ry="28.5" fill="none" stroke="#14f014" stroke-width="3.4"/><ellipse cx="153" cy="762" rx="26" ry="29" fill="none" stroke="#ff0a0a" stroke-width="3.4"/></svg>
</body></html>
